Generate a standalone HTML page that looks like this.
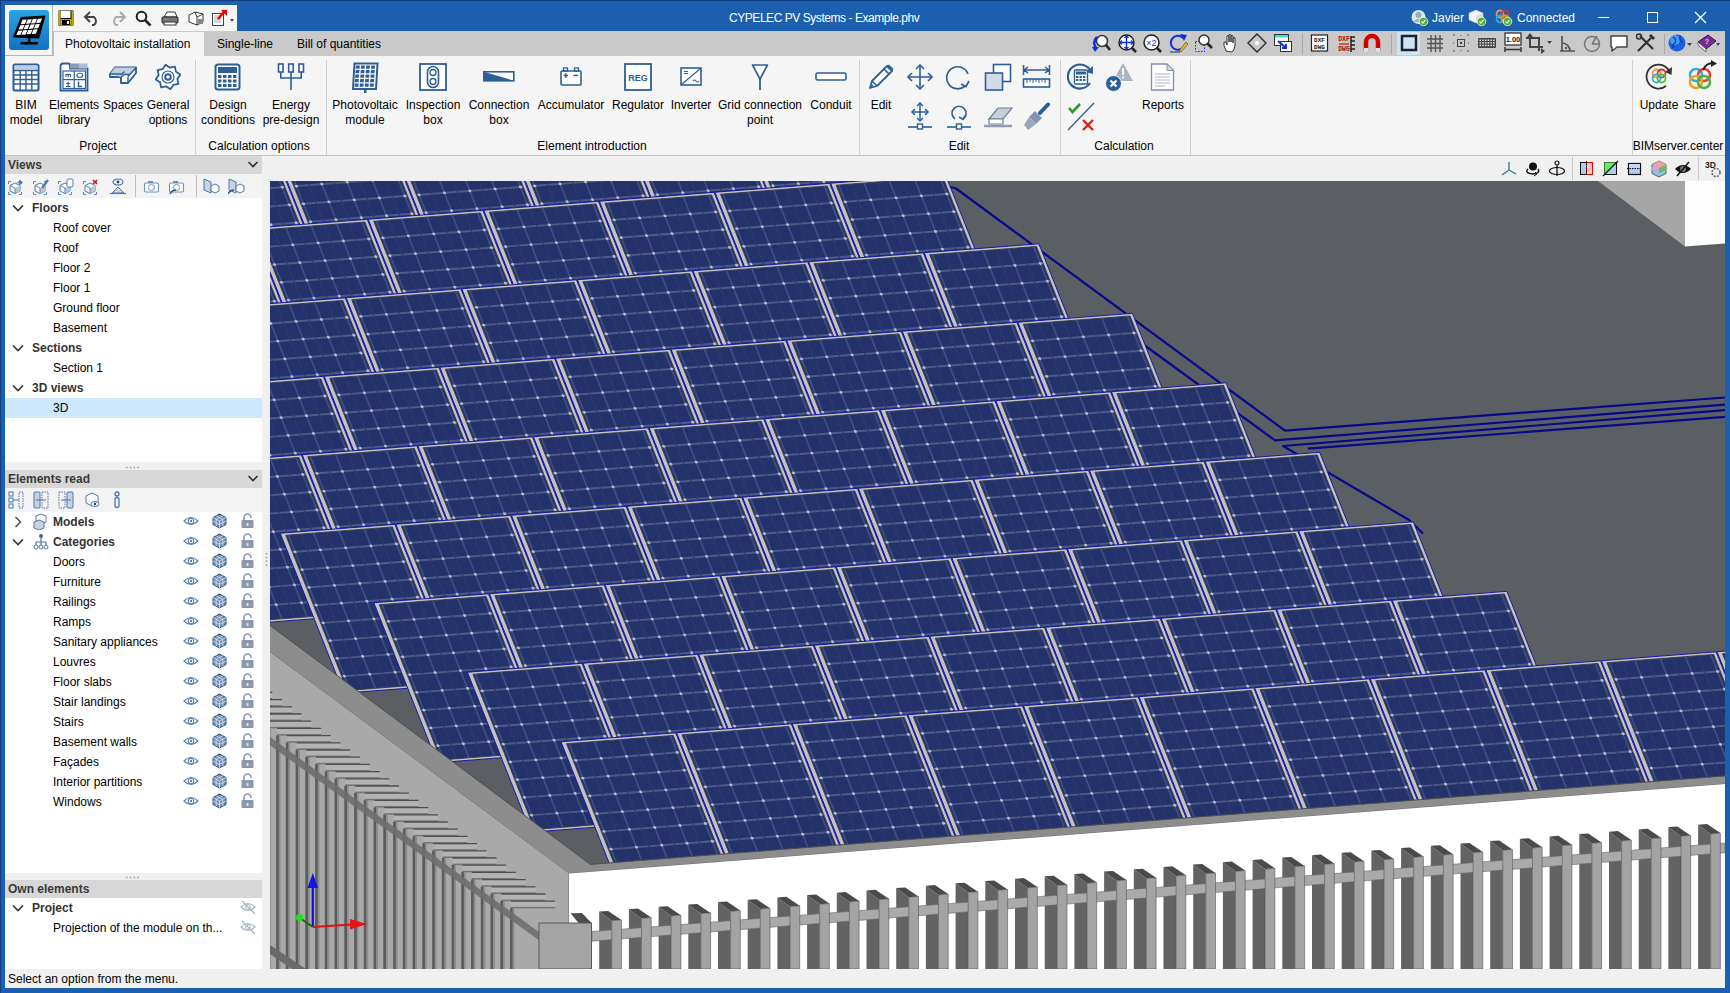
<!DOCTYPE html><html><head><meta charset="utf-8"><style>
*{box-sizing:border-box}
body{margin:0;width:1730px;height:993px;overflow:hidden;position:relative;background:#1b5fae;font-family:"Liberation Sans",sans-serif;font-size:12px;color:#000}
.a{position:absolute}
.t{position:absolute;white-space:nowrap;line-height:15px}
.hdr{position:absolute;left:5px;width:257px;height:18px;background:#d7d7d7;font-weight:bold;color:#3a3a3a;padding-left:3px;line-height:18px}
.tb{position:absolute;left:5px;width:257px;background:#f3f3f3}
.tree{position:absolute;left:5px;width:257px;background:#fff}
.it{position:absolute;white-space:nowrap;line-height:20px;height:20px}
.b{font-weight:bold;color:#333}
.rl{position:absolute;text-align:center;line-height:15px;white-space:nowrap}
.gl{position:absolute;top:139px;text-align:center;line-height:15px;white-space:nowrap}
.sep{position:absolute;top:60px;width:1px;height:95px;background:#cfcfcf}
</style></head><body><div class="a" style="left:0;top:0;width:1730px;height:1px;background:#0e3f85"></div><div class="a" style="left:0;top:0;width:1px;height:993px;background:#0e3f85"></div><div class="t" style="left:729px;top:10.5px;color:#fff;letter-spacing:-0.45px">CYPELEC PV Systems - Example.phv</div><div class="t" style="left:1432px;top:10.5px;color:#fff">Javier</div><div class="t" style="left:1517px;top:10.5px;color:#fff">Connected</div><div class="a" style="left:1598px;top:17px;width:11px;height:1px;background:#fff"></div><div class="a" style="left:1647px;top:12px;width:11px;height:11px;border:1px solid #fff"></div><svg class="a" style="left:1694px;top:11px" width="13" height="13"><path d="M1,1L12,12M12,1L1,12" stroke="#fff" stroke-width="1.3"/></svg><div class="a" style="left:53px;top:5px;width:184px;height:26px;background:#f5f5f5"></div><div class="a" style="left:5px;top:31px;width:1720px;height:25px;background:#c9c9c9"></div><div class="a" style="left:53px;top:32px;width:151px;height:24px;background:#f5f5f5;border-left:1px solid #bdbdbd"></div><div class="t" style="left:65px;top:37px">Photovoltaic installation</div><div class="t" style="left:217px;top:37px">Single-line</div><div class="t" style="left:297px;top:37px">Bill of quantities</div><div class="a" style="left:1397px;top:32px;width:23px;height:23px;background:#cce4f7"></div><div class="a" style="left:5px;top:5px;width:48px;height:51px;background:#f5f5f5;border-right:1px solid #b4b4b4;border-bottom:1px solid #b4b4b4"></div><div class="a" style="left:9px;top:10px;width:40px;height:40px;border-radius:3px;background:linear-gradient(#29a3e2,#1570c2)"></div><div class="a" style="left:5px;top:56px;width:1720px;height:99px;background:#f5f5f5"></div><div class="a" style="left:5px;top:155px;width:1720px;height:1px;background:#c3c3c3"></div><div class="sep" style="left:194.5px"></div><div class="sep" style="left:326px"></div><div class="sep" style="left:859px"></div><div class="sep" style="left:1059.5px"></div><div class="sep" style="left:1189.5px"></div><div class="sep" style="left:1631.5px"></div><div class="rl" style="left:-34px;width:120px;top:98px">BIM<br>model</div><div class="rl" style="left:14px;width:120px;top:98px">Elements<br>library</div><div class="rl" style="left:63px;width:120px;top:98px">Spaces</div><div class="rl" style="left:108px;width:120px;top:98px">General<br>options</div><div class="rl" style="left:168px;width:120px;top:98px">Design<br>conditions</div><div class="rl" style="left:231px;width:120px;top:98px">Energy<br>pre-design</div><div class="rl" style="left:305px;width:120px;top:98px">Photovoltaic<br>module</div><div class="rl" style="left:373px;width:120px;top:98px">Inspection<br>box</div><div class="rl" style="left:439px;width:120px;top:98px">Connection<br>box</div><div class="rl" style="left:511px;width:120px;top:98px">Accumulator</div><div class="rl" style="left:578px;width:120px;top:98px">Regulator</div><div class="rl" style="left:631px;width:120px;top:98px">Inverter</div><div class="rl" style="left:700px;width:120px;top:98px">Grid connection<br>point</div><div class="rl" style="left:771px;width:120px;top:98px">Conduit</div><div class="rl" style="left:821px;width:120px;top:98px">Edit</div><div class="rl" style="left:1103px;width:120px;top:98px">Reports</div><div class="rl" style="left:1599px;width:120px;top:98px">Update</div><div class="rl" style="left:1640px;width:120px;top:98px">Share</div><div class="gl" style="left:28px;width:140px">Project</div><div class="gl" style="left:189px;width:140px">Calculation options</div><div class="gl" style="left:522px;width:140px">Element introduction</div><div class="gl" style="left:889px;width:140px">Edit</div><div class="gl" style="left:1054px;width:140px">Calculation</div><div class="gl" style="left:1608px;width:140px">BIMserver.center</div><div class="a" style="left:5px;top:156px;width:1720px;height:813px;background:#f0f0f0"></div><div class="hdr" style="top:156px">Views</div><div class="tb" style="top:174px;height:24px"></div><div class="tree" style="top:198px;height:264px"></div><div class="a" style="left:5px;top:398px;width:257px;height:20px;background:#cce8ff"></div><div class="it b" style="left:32px;top:198px">Floors</div><svg class="a" style="left:12px;top:204px" width="12" height="8"><path d="M1,1.5L6,6.5L11,1.5" fill="none" stroke="#333" stroke-width="1.6"/></svg><div class="it" style="left:53px;top:218px">Roof cover</div><div class="it" style="left:53px;top:238px">Roof</div><div class="it" style="left:53px;top:258px">Floor 2</div><div class="it" style="left:53px;top:278px">Floor 1</div><div class="it" style="left:53px;top:298px">Ground floor</div><div class="it" style="left:53px;top:318px">Basement</div><div class="it b" style="left:32px;top:338px">Sections</div><svg class="a" style="left:12px;top:344px" width="12" height="8"><path d="M1,1.5L6,6.5L11,1.5" fill="none" stroke="#333" stroke-width="1.6"/></svg><div class="it" style="left:53px;top:358px">Section 1</div><div class="it b" style="left:32px;top:378px">3D views</div><svg class="a" style="left:12px;top:384px" width="12" height="8"><path d="M1,1.5L6,6.5L11,1.5" fill="none" stroke="#333" stroke-width="1.6"/></svg><div class="it" style="left:53px;top:398px">3D</div><div class="hdr" style="top:469.5px">Elements read</div><div class="tb" style="top:487.5px;height:24px"></div><div class="tree" style="top:511.5px;height:361px"></div><div class="it b" style="left:53px;top:512px">Models</div><svg class="a" style="left:14px;top:516px" width="8" height="12"><path d="M1.5,1L6.5,6L1.5,11" fill="none" stroke="#555" stroke-width="1.6"/></svg><div class="it b" style="left:53px;top:532px">Categories</div><svg class="a" style="left:12px;top:538px" width="12" height="8"><path d="M1,1.5L6,6.5L11,1.5" fill="none" stroke="#333" stroke-width="1.6"/></svg><div class="it" style="left:53px;top:552px">Doors</div><div class="it" style="left:53px;top:572px">Furniture</div><div class="it" style="left:53px;top:592px">Railings</div><div class="it" style="left:53px;top:612px">Ramps</div><div class="it" style="left:53px;top:632px">Sanitary appliances</div><div class="it" style="left:53px;top:652px">Louvres</div><div class="it" style="left:53px;top:672px">Floor slabs</div><div class="it" style="left:53px;top:692px">Stair landings</div><div class="it" style="left:53px;top:712px">Stairs</div><div class="it" style="left:53px;top:732px">Basement walls</div><div class="it" style="left:53px;top:752px">Fa&ccedil;ades</div><div class="it" style="left:53px;top:772px">Interior partitions</div><div class="it" style="left:53px;top:792px">Windows</div><div class="hdr" style="top:880px">Own elements</div><div class="tree" style="top:898px;height:71px"></div><div class="it b" style="left:32px;top:898px">Project</div><svg class="a" style="left:12px;top:904px" width="12" height="8"><path d="M1,1.5L6,6.5L11,1.5" fill="none" stroke="#333" stroke-width="1.6"/></svg><div class="it" style="left:53px;top:918px">Projection of the module on th...</div><div class="a" style="left:5px;top:969px;width:1720px;height:19px;background:#f0f0f0"></div><div class="t" style="left:8px;top:971.5px">Select an option from the menu.</div><svg class="a" style="left:9px;top:10px" width="40" height="40" viewBox="0 0 40 40"><polygon points="12.5,7.8 35.5,6.3 29.5,27.5 5,26.5" fill="#000" stroke="#000" stroke-width="1.8" stroke-linejoin="round"/><polygon points="13.5,9.8 17.7,9.5 16.0,13.9 11.8,14.2" fill="#fff"/><polygon points="11.3,15.2 15.5,15.0 13.7,19.3 9.5,19.6" fill="#fff"/><polygon points="9.1,20.7 13.3,20.4 11.5,24.7 7.3,25.0" fill="#fff"/><polygon points="18.7,9.5 22.9,9.2 21.1,13.5 16.9,13.8" fill="#fff"/><polygon points="16.4,14.9 20.6,14.6 18.8,19.0 14.6,19.2" fill="#fff"/><polygon points="14.2,20.3 18.4,20.0 16.6,24.4 12.4,24.7" fill="#fff"/><polygon points="23.8,9.1 28.0,8.8 26.2,13.2 22.0,13.5" fill="#fff"/><polygon points="21.6,14.5 25.8,14.3 24.0,18.6 19.8,18.9" fill="#fff"/><polygon points="19.3,20.0 23.5,19.7 21.7,24.0 17.5,24.3" fill="#fff"/><polygon points="28.9,8.8 33.1,8.5 31.3,12.8 27.1,13.1" fill="#fff"/><polygon points="26.7,14.2 30.9,13.9 29.1,18.3 24.9,18.5" fill="#fff"/><polygon points="24.4,19.6 28.6,19.3 26.9,23.7 22.7,24.0" fill="#fff"/><rect x="18.9" y="27" width="2.6" height="5.5" fill="#000"/><rect x="11.4" y="32" width="17.6" height="2.6" rx="1.3" fill="#000"/></svg><svg class="a" style="left:58px;top:10px" width="16" height="16" viewBox="0 0 16 16"><rect x="0.5" y="0.5" width="15" height="15" fill="#000"/><rect x="2.5" y="1" width="10" height="7" fill="#fff"/><rect x="2.5" y="9" width="11" height="6" fill="#bfb000"/><rect x="4" y="10" width="8" height="5" fill="#000"/><rect x="9" y="11" width="2" height="3" fill="#fff"/><rect x="0.5" y="1" width="2" height="14" fill="#bfb000"/><rect x="13.5" y="1" width="2" height="14" fill="#bfb000"/></svg><svg class="a" style="left:83px;top:10px" width="18" height="16" viewBox="0 0 18 16"><path d="M3,7 H11 A5,5 0 0 1 11,15 H9" fill="none" stroke="#444" stroke-width="2"/><path d="M7,2 L2,7 L7,12" fill="none" stroke="#444" stroke-width="2"/></svg><svg class="a" style="left:109px;top:10px" width="18" height="16" viewBox="0 0 18 16"><path d="M15,7 H7 A5,5 0 0 0 7,15 H9" fill="none" stroke="#aaa" stroke-width="2"/><path d="M11,2 L16,7 L11,12" fill="none" stroke="#aaa" stroke-width="2"/></svg><svg class="a" style="left:135px;top:10px" width="17" height="17" viewBox="0 0 17 17"><circle cx="6.5" cy="6.5" r="4.8" fill="none" stroke="#222" stroke-width="2"/><path d="M10,10 L15.5,15.5" stroke="#222" stroke-width="2.6"/></svg><svg class="a" style="left:161px;top:10px" width="18" height="16" viewBox="0 0 18 16"><path d="M3,7 L6,2 L14,2 L16,7 Z" fill="#fff" stroke="#333"/><rect x="1" y="7" width="16" height="6" rx="1" fill="#777" stroke="#222"/><rect x="3" y="12" width="12" height="3" fill="#fff" stroke="#333"/><circle cx="5" cy="9" r="1" fill="#3c3"/></svg><svg class="a" style="left:187px;top:10px" width="18" height="16" viewBox="0 0 18 16"><path d="M2,5 L8,2 L16,4 L16,12 L10,15 L2,12 Z" fill="#fff" stroke="#333"/><path d="M8,2 L10,7 L10,15 M10,7 L16,4" fill="none" stroke="#333"/><rect x="11" y="9" width="5" height="5" fill="#888"/></svg><svg class="a" style="left:211px;top:9px" width="24" height="18" viewBox="0 0 24 18"><rect x="1.5" y="4.5" width="11" height="12" fill="#fff" stroke="#444"/><path d="M3,7H10M3,9H10M3,11H10M3,13H10" stroke="#aaa"/><path d="M7,10 L13,3" stroke="#e00" stroke-width="2.5"/><polygon points="10,1 16,1 16,7" fill="#e00"/><polygon points="19,10 23,10 21,13" fill="#444"/></svg><svg class="a" style="left:1411px;top:9px" width="18" height="17" viewBox="0 0 18 17"><circle cx="7.5" cy="8" r="7" fill="#d8e8f0"/><circle cx="7.5" cy="6" r="3" fill="#9ab"/><path d="M2,13 Q7.5,7 13,13" fill="#9ab"/><circle cx="12.5" cy="12.5" r="4.3" fill="#4caf30" stroke="#fff" stroke-width="0.8"/><path d="M10.5,12.5 L12,14 L14.5,11" fill="none" stroke="#fff" stroke-width="1.2"/></svg><svg class="a" style="left:1468px;top:9px" width="19" height="17" viewBox="0 0 19 17"><polygon points="8,1 15,4 15,11 8,14 1,11 1,4" fill="#f4f4f4" stroke="#bbb" stroke-width="0.6"/><polygon points="8,7 15,4 15,11 8,14" fill="#ddd"/><circle cx="13.5" cy="12.5" r="4.3" fill="#4caf30" stroke="#fff" stroke-width="0.8"/><path d="M11.5,12.5 L13,14 L15.5,11" fill="none" stroke="#fff" stroke-width="1.2"/></svg><svg class="a" style="left:1495px;top:9px" width="18" height="17" viewBox="0 0 18 17"><circle cx="5" cy="5" r="3.5" fill="none" stroke="#e94" stroke-width="1.8"/><circle cx="10" cy="5" r="3.5" fill="none" stroke="#d33" stroke-width="1.8"/><circle cx="5" cy="10" r="3.5" fill="none" stroke="#3ad" stroke-width="1.8"/><circle cx="10" cy="10" r="3.5" fill="none" stroke="#e90" stroke-width="1.8"/><circle cx="12.5" cy="12.5" r="4.3" fill="#4caf30" stroke="#fff" stroke-width="0.8"/><path d="M10.5,12.5 L12,14 L14.5,11" fill="none" stroke="#fff" stroke-width="1.2"/></svg><svg class="a" style="left:12px;top:63px" width="28" height="29" viewBox="0 0 28 29"><rect x="1.5" y="1.5" width="25" height="26" rx="1.5" fill="#fff" stroke="#2e5e96" stroke-width="2"/><rect x="2.5" y="2.5" width="23" height="4" fill="#c3cde0"/><path d="M2,7.5H26M2,12H26M2,16.5H26M2,21H26M8.2,7V27M14,7V27M19.8,7V27" stroke="#2e5e96" stroke-width="1.4"/></svg><svg class="a" style="left:59px;top:62px" width="30" height="30" viewBox="0 0 30 30"><path d="M1.5,4 Q1.5,1.5 4,1.5 H9 Q11,1.5 11,4 V6.5 H28.5 V28.5 H1.5 Z" fill="#fff" stroke="#2e5e96" stroke-width="1.8"/><rect x="11" y="1.5" width="9" height="5" fill="#8c9dbc"/><rect x="20" y="1.5" width="8.5" height="5" fill="#b0bccf"/><rect x="4" y="9" width="22.5" height="17.5" fill="none" stroke="#2e5e96" stroke-width="1.2"/><path d="M15.2,9V26.5M4,17.7H26.5" stroke="#2e5e96" stroke-width="1.2"/><path d="M7,15V12.5H11.5V15M9.2,11.5V15" fill="none" stroke="#2e5e96" stroke-width="1.1"/><ellipse cx="20.8" cy="13.3" rx="3" ry="2" fill="none" stroke="#2e5e96" stroke-width="1.1"/><path d="M19.5,19.5V24.5H23" fill="none" stroke="#2e5e96" stroke-width="1.5"/><path d="M7,24.5H11.5M9.2,19.5V24.5M7.2,21.5L11.2,21.5" stroke="#2e5e96" stroke-width="1.1"/></svg><svg class="a" style="left:108px;top:66px" width="30" height="22" viewBox="0 0 30 22"><polygon points="2,8 7,1.5 28,1.5 28,7 20,17 13,17 13,11 2,11" fill="#fff" stroke="#2e5e96" stroke-width="1.8" stroke-linejoin="round"/><polygon points="7,1.5 28,1.5 22,8 16,8 13,11 2,8" fill="#c3cde0"/><path d="M2,8H14L16.5,5.5M13,11V17M20,10.5V17M20,10.5L28,1.8M13,11L16.5,8.5H21.5" fill="none" stroke="#2e5e96" stroke-width="1.4"/></svg><svg class="a" style="left:155px;top:64px" width="26" height="26" viewBox="0 0 26 26"><polygon points="25.3,10.6 22.3,14.9 23.4,19.9 18.3,20.9 15.4,25.3 11.1,22.3 6.1,23.4 5.1,18.3 0.7,15.4 3.7,11.1 2.6,6.1 7.7,5.1 10.6,0.7 14.9,3.7 19.9,2.6 20.9,7.7" fill="#fff" stroke="#2e5e96" stroke-width="1.8" stroke-linejoin="round"/><circle cx="13" cy="13" r="6" fill="none" stroke="#2e5e96" stroke-width="1.2"/><circle cx="13" cy="13" r="2.8" fill="none" stroke="#2e5e96" stroke-width="2"/></svg><svg class="a" style="left:214px;top:63px" width="27" height="28" viewBox="0 0 27 28"><rect x="1.5" y="1.5" width="24" height="25" rx="2.5" fill="#fff" stroke="#2e5e96" stroke-width="2"/><rect x="4" y="4" width="19" height="6" fill="#2e5e96"/><rect x="4" y="12.0" width="3.5" height="3" fill="#2e5e96"/><rect x="4" y="16.5" width="3.5" height="3" fill="#2e5e96"/><rect x="4" y="21.0" width="3.5" height="3" fill="#2e5e96"/><rect x="9" y="12.0" width="3.5" height="3" fill="#2e5e96"/><rect x="9" y="16.5" width="3.5" height="3" fill="#2e5e96"/><rect x="9" y="21.0" width="3.5" height="3" fill="#2e5e96"/><rect x="14" y="12.0" width="3.5" height="3" fill="#2e5e96"/><rect x="14" y="16.5" width="3.5" height="3" fill="#2e5e96"/><rect x="14" y="21.0" width="3.5" height="3" fill="#2e5e96"/><rect x="19" y="12.0" width="3.5" height="3" fill="#2e5e96"/><rect x="19" y="16.5" width="3.5" height="3" fill="#2e5e96"/><rect x="19" y="21.0" width="3.5" height="3" fill="#2e5e96"/></svg><svg class="a" style="left:277px;top:63px" width="28" height="28" viewBox="0 0 28 28"><rect x="1.5" y="1" width="4.5" height="8" fill="#fff" stroke="#2e5e96" stroke-width="1.6"/><rect x="11.7" y="1" width="4.5" height="8" fill="#fff" stroke="#2e5e96" stroke-width="1.6"/><rect x="22" y="1" width="4.5" height="8" fill="#fff" stroke="#2e5e96" stroke-width="1.6"/><path d="M3.8,9V15H24.2V9M14,9V27" fill="none" stroke="#2e5e96" stroke-width="1.6"/></svg><svg class="a" style="left:352px;top:62px" width="27" height="32" viewBox="0 0 27 32"><polygon points="2.5,1.5 25.5,1.5 24,27 1,27" fill="#fff" stroke="#2e5e96" stroke-width="2"/><polygon points="4.0,3.5 7.8,3.5 7.5,6.8 3.7,6.8" fill="#2e5e96"/><polygon points="3.7,8.0 7.5,8.0 7.2,11.3 3.4000000000000004,11.3" fill="#2e5e96"/><polygon points="3.4,12.5 7.2,12.5 6.9,15.8 3.1,15.8" fill="#2e5e96"/><polygon points="3.1,17.0 6.9,17.0 6.6,20.3 2.8000000000000003,20.3" fill="#2e5e96"/><polygon points="2.8,21.5 6.6,21.5 6.3,24.8 2.5,24.8" fill="#2e5e96"/><polygon points="9.1,3.5 12.899999999999999,3.5 12.6,6.8 8.8,6.8" fill="#2e5e96"/><polygon points="8.799999999999999,8.0 12.599999999999998,8.0 12.299999999999999,11.3 8.5,11.3" fill="#2e5e96"/><polygon points="8.5,12.5 12.299999999999999,12.5 12.0,15.8 8.200000000000001,15.8" fill="#2e5e96"/><polygon points="8.2,17.0 11.999999999999998,17.0 11.7,20.3 7.9,20.3" fill="#2e5e96"/><polygon points="7.8999999999999995,21.5 11.7,21.5 11.4,24.8 7.6000000000000005,24.8" fill="#2e5e96"/><polygon points="14.2,3.5 18.0,3.5 17.7,6.8 13.899999999999999,6.8" fill="#2e5e96"/><polygon points="13.899999999999999,8.0 17.7,8.0 17.4,11.3 13.599999999999998,11.3" fill="#2e5e96"/><polygon points="13.6,12.5 17.4,12.5 17.099999999999998,15.8 13.299999999999999,15.8" fill="#2e5e96"/><polygon points="13.299999999999999,17.0 17.1,17.0 16.8,20.3 12.999999999999998,20.3" fill="#2e5e96"/><polygon points="13.0,21.5 16.8,21.5 16.5,24.8 12.7,24.8" fill="#2e5e96"/><polygon points="19.299999999999997,3.5 23.099999999999998,3.5 22.799999999999997,6.8 19.0,6.8" fill="#2e5e96"/><polygon points="18.999999999999996,8.0 22.799999999999997,8.0 22.499999999999996,11.3 18.7,11.3" fill="#2e5e96"/><polygon points="18.699999999999996,12.5 22.499999999999996,12.5 22.199999999999996,15.8 18.4,15.8" fill="#2e5e96"/><polygon points="18.4,17.0 22.2,17.0 21.9,20.3 18.1,20.3" fill="#2e5e96"/><polygon points="18.099999999999998,21.5 21.9,21.5 21.599999999999998,24.8 17.8,24.8" fill="#2e5e96"/><rect x="12" y="27" width="2.5" height="4" fill="#2e5e96"/></svg><svg class="a" style="left:419px;top:63px" width="28" height="28" viewBox="0 0 28 28"><rect x="1" y="1" width="26" height="26" fill="#fff" stroke="#2e5e96" stroke-width="1.8"/><rect x="8.5" y="3.5" width="11" height="21" rx="5.5" fill="#fff" stroke="#2e5e96" stroke-width="1.6"/><circle cx="14" cy="9.5" r="3" fill="none" stroke="#2e5e96" stroke-width="1.3"/><circle cx="14" cy="18.5" r="3" fill="none" stroke="#2e5e96" stroke-width="1.3"/></svg><svg class="a" style="left:483px;top:71px" width="32" height="11" viewBox="0 0 32 11"><rect x="0.8" y="0.8" width="30" height="9" fill="#fff" stroke="#2e5e96" stroke-width="1.6"/><polygon points="0.8,0.8 31,9.8 0.8,9.8" fill="#2e5e96"/></svg><svg class="a" style="left:560px;top:67px" width="22" height="19" viewBox="0 0 22 19"><rect x="1" y="4" width="20" height="14" rx="1" fill="#fff" stroke="#2e5e96" stroke-width="1.6"/><rect x="3.5" y="1" width="4" height="3" fill="none" stroke="#2e5e96" stroke-width="1.3"/><rect x="14.5" y="1" width="4" height="3" fill="none" stroke="#2e5e96" stroke-width="1.3"/><path d="M3.5,8.5H8M5.75,6.3V10.7M13.5,8.5H18" stroke="#2e5e96" stroke-width="1.5"/></svg><svg class="a" style="left:624px;top:63px" width="28" height="28" viewBox="0 0 28 28"><rect x="1" y="1" width="26" height="26" fill="#fff" stroke="#2e5e96" stroke-width="1.8"/><text x="14" y="18" text-anchor="middle" font-family="Liberation Sans" font-weight="bold" font-size="9" fill="#2e5e96">REG</text></svg><svg class="a" style="left:680px;top:67px" width="22" height="19" viewBox="0 0 22 19"><rect x="1" y="1" width="20" height="17" fill="#fff" stroke="#2e5e96" stroke-width="1.6"/><path d="M1.5,17.5L20.5,1.5M4,4.5H8M4,6.5H8M13,14 q1.5,-2 3,0 t3,0" fill="none" stroke="#2e5e96" stroke-width="1.1"/></svg><svg class="a" style="left:751px;top:63px" width="18" height="28" viewBox="0 0 18 28"><path d="M1.5,2H16.5L9,16Z" fill="#fff" stroke="#2e5e96" stroke-width="1.6" stroke-linejoin="round"/><path d="M9,15V27" stroke="#2e5e96" stroke-width="1.8"/></svg><svg class="a" style="left:815px;top:72px" width="32" height="10" viewBox="0 0 32 10"><rect x="1" y="1" width="30" height="7" rx="1.5" fill="#fff" stroke="#2e5e96" stroke-width="1.6"/></svg><svg class="a" style="left:868px;top:63px" width="26" height="27" viewBox="0 0 26 27"><polygon points="2,25 4,18 19,3 24,8 9,23" fill="#fff" stroke="#2e5e96" stroke-width="1.8" stroke-linejoin="round"/><path d="M4,18L9,23M16,6L21,11M2,25L5,22" stroke="#2e5e96" stroke-width="1.6"/><polygon points="19,3 24,8 25.5,6 21,1.5" fill="#2e5e96"/></svg><svg class="a" style="left:907px;top:64px" width="26" height="26" viewBox="0 0 26 26"><path d="M13,1V25M1,13H25" stroke="#2e5e96" stroke-width="1.6"/><path d="M9,5L13,1L17,5M9,21L13,25L17,21M5,9L1,13L5,17M21,9L25,13L21,17" fill="none" stroke="#2e5e96" stroke-width="1.6"/></svg><svg class="a" style="left:945px;top:64px" width="27" height="27" viewBox="0 0 27 27"><path d="M20,22 A11,11 0 1 1 23,10" fill="none" stroke="#2e5e96" stroke-width="1.7"/><path d="M24,17 L21,22.5 L16,20" fill="none" stroke="#2e5e96" stroke-width="1.7"/></svg><svg class="a" style="left:984px;top:63px" width="29" height="29" viewBox="0 0 29 29"><rect x="9.5" y="1.5" width="17" height="17" fill="#fff" stroke="#2e5e96" stroke-width="1.6"/><rect x="1.5" y="10" width="17" height="17" fill="#d5dbe6" stroke="#2e5e96" stroke-width="1.6"/></svg><svg class="a" style="left:1022px;top:64px" width="29" height="25" viewBox="0 0 29 25"><path d="M1.5,1V11M27.5,1V11M2,6H27M6,3L2,6L6,9M23,3L27,6L23,9" fill="none" stroke="#2e5e96" stroke-width="1.5"/><rect x="1.5" y="15" width="26" height="8" fill="#fff" stroke="#2e5e96" stroke-width="1.6"/><path d="M5,15V19M8,15V18M11,15V19M14,15V18M17,15V19M20,15V18M23,15V19" stroke="#2e5e96" stroke-width="1"/></svg><svg class="a" style="left:907px;top:102px" width="26" height="28" viewBox="0 0 26 28"><path d="M13,1V19M5,10H21" stroke="#2e5e96" stroke-width="1.5"/><path d="M10,4L13,1L16,4M10,16L13,19L16,16M8,7L5,10L8,13M18,7L21,10L18,13" fill="none" stroke="#2e5e96" stroke-width="1.5"/><path d="M1,25H25" stroke="#2e5e96" stroke-width="1.6"/><rect x="10.5" y="22" width="5" height="5" fill="#fff" stroke="#2e5e96" stroke-width="1.4"/></svg><svg class="a" style="left:946px;top:102px" width="26" height="28" viewBox="0 0 26 28"><path d="M9,17 A7,7 0 1 1 17,17" fill="none" stroke="#2e5e96" stroke-width="1.6"/><path d="M20,13L17,17.5L13,15" fill="none" stroke="#2e5e96" stroke-width="1.5"/><path d="M1,25H25" stroke="#2e5e96" stroke-width="1.6"/><rect x="10.5" y="22" width="5" height="5" fill="#fff" stroke="#2e5e96" stroke-width="1.4"/></svg><svg class="a" style="left:983px;top:106px" width="31" height="22" viewBox="0 0 31 22"><polygon points="6,13 15,2 29,2 20,13" fill="#c9cfda" stroke="#6f7f99" stroke-width="1.2"/><polygon points="6,13 20,13 20,18 6,18" fill="#fff" stroke="#6f7f99" stroke-width="1.2"/><path d="M1,20H29" stroke="#8e9bb0" stroke-width="2.5"/></svg><svg class="a" style="left:1023px;top:102px" width="28" height="29" viewBox="0 0 28 29"><path d="M17,11 L25,2.5" stroke="#2e5e96" stroke-width="4" stroke-linecap="round"/><polygon points="12,9 19,16 13,22 6,15" fill="#8594b0"/><polygon points="6,15 13,22 5,28 1,23" fill="#9aa6bd"/></svg><svg class="a" style="left:1067px;top:63px" width="28" height="29" viewBox="0 0 28 29"><path d="M23,20 A12,12 0 1 1 24,9" fill="none" stroke="#2e5e96" stroke-width="2.2"/><polygon points="26,3 26,11 19,9" fill="#2e5e96"/><rect x="7.5" y="7" width="13" height="14" rx="1" fill="#fff" stroke="#2e5e96" stroke-width="1.4"/><rect x="9" y="8.5" width="10" height="3" fill="#2e5e96"/><rect x="9.0" y="13" width="2.4" height="2" fill="#2e5e96"/><rect x="9.0" y="16" width="2.4" height="2" fill="#2e5e96"/><rect x="12.5" y="13" width="2.4" height="2" fill="#2e5e96"/><rect x="12.5" y="16" width="2.4" height="2" fill="#2e5e96"/><rect x="16.0" y="13" width="2.4" height="2" fill="#2e5e96"/><rect x="16.0" y="16" width="2.4" height="2" fill="#2e5e96"/></svg><svg class="a" style="left:1104px;top:62px" width="31" height="31" viewBox="0 0 31 31"><polygon points="19,1 29,19 9,19" fill="#aab4c4"/><rect x="18.2" y="6" width="1.8" height="7" fill="#fff"/><rect x="18.2" y="14.5" width="1.8" height="2" fill="#fff"/><circle cx="9.5" cy="21.5" r="8" fill="#2e5e96" stroke="#fff" stroke-width="1"/><path d="M6.5,18.5L12.5,24.5M12.5,18.5L6.5,24.5" stroke="#fff" stroke-width="2.2"/></svg><svg class="a" style="left:1067px;top:102px" width="28" height="29" viewBox="0 0 28 29"><path d="M2,6 L5.5,10 L13,2" fill="none" stroke="#2a9a2a" stroke-width="2.6"/><path d="M1,28 L27,1" stroke="#2e5e96" stroke-width="1.3"/><path d="M16,18L26,28M26,18L16,28" stroke="#e21b1b" stroke-width="2.4"/></svg><svg class="a" style="left:1150px;top:63px" width="25" height="28" viewBox="0 0 25 28"><polygon points="1.5,1 17,1 23.5,7.5 23.5,27 1.5,27" fill="#fff" stroke="#7d8ead" stroke-width="1.3"/><polygon points="17,1 17,7.5 23.5,7.5" fill="#d8dde8" stroke="#7d8ead" stroke-width="1"/><path d="M5,11H20M5,14H20M5,17H20M5,20H20M5,23H15" stroke="#aab5cc" stroke-width="1"/></svg><svg class="a" style="left:1645px;top:62px" width="28" height="29" viewBox="0 0 28 29"><path d="M21,24 A12,12 0 1 1 25,11" fill="none" stroke="#333" stroke-width="1.8"/><polygon points="27,5 26.5,13 20,10" fill="#333"/><circle cx="11.5" cy="11.5" r="4" fill="none" stroke="#e94" stroke-width="1.8"/><circle cx="16.5" cy="11.5" r="4" fill="none" stroke="#d33" stroke-width="1.8"/><circle cx="11.5" cy="16.5" r="4" fill="none" stroke="#3ad" stroke-width="1.8"/><circle cx="16.5" cy="16.5" r="4" fill="none" stroke="#5b3" stroke-width="1.8"/></svg><svg class="a" style="left:1686px;top:60px" width="32" height="31" viewBox="0 0 32 31"><circle cx="10" cy="15" r="6" fill="none" stroke="#2ab0e0" stroke-width="2.6"/><circle cx="18" cy="15" r="6" fill="none" stroke="#e04040" stroke-width="2.6"/><circle cx="10" cy="22" r="6" fill="none" stroke="#f0a020" stroke-width="2.6"/><circle cx="18" cy="22" r="6" fill="none" stroke="#50b040" stroke-width="2.6"/><path d="M17,10 Q20,3 27,3" fill="none" stroke="#222" stroke-width="2.2"/><polygon points="25,0 31,3.5 25,7" fill="#222"/></svg><svg class="a" style="left:1091px;top:33px" width="20" height="20" viewBox="0 0 20 20"><circle cx="11" cy="8" r="5.5" fill="#fff" stroke="#333" stroke-width="1.5"/><path d="M15,12L19,17" stroke="#222" stroke-width="2.5"/><path d="M6,4 Q1,9 5,15" fill="none" stroke="#1030e0" stroke-width="2.5"/><polygon points="1,14 8,14 4,19" fill="#1030e0"/></svg><svg class="a" style="left:1117px;top:33px" width="20" height="20" viewBox="0 0 20 20"><circle cx="9.5" cy="9.5" r="7.5" fill="#fff" stroke="#222" stroke-width="1.5"/><path d="M15,15L19,19" stroke="#222" stroke-width="2.5"/><path d="M9.5,3V16M3,9.5H16" stroke="#1030e0" stroke-width="1.4"/><path d="M7.5,5L9.5,3L11.5,5M7.5,14L9.5,16L11.5,14M5,7.5L3,9.5L5,11.5M14,7.5L16,9.5L14,11.5" fill="none" stroke="#1030e0" stroke-width="1.4"/></svg><svg class="a" style="left:1142px;top:33px" width="20" height="20" viewBox="0 0 20 20"><circle cx="9.5" cy="9.5" r="7.5" fill="#fff" stroke="#222" stroke-width="1.5"/><path d="M15,15L19,19" stroke="#222" stroke-width="2.5"/><text x="9.5" y="13" text-anchor="middle" font-family="Liberation Sans" font-size="9" fill="#1030e0">&#215;2</text></svg><svg class="a" style="left:1168px;top:33px" width="20" height="20" viewBox="0 0 20 20"><path d="M15,5 A7,7 0 1 0 13,16" fill="none" stroke="#1030e0" stroke-width="2"/><polygon points="12,1 19,2 16,8" fill="#1030e0"/><polygon points="11,18 18,9 20,11 13,19" fill="#e8c020" stroke="#333" stroke-width="0.6"/><path d="M2,19H12" stroke="#333" stroke-width="1"/></svg><svg class="a" style="left:1194px;top:33px" width="20" height="20" viewBox="0 0 20 20"><rect x="1.5" y="8.5" width="9" height="10" fill="none" stroke="#1030e0" stroke-dasharray="1.5,1.5"/><circle cx="10" cy="7" r="5" fill="#fff" stroke="#333" stroke-width="1.5"/><path d="M13.5,10.5L18,15" stroke="#222" stroke-width="2.5"/></svg><svg class="a" style="left:1221px;top:33px" width="20" height="20" viewBox="0 0 20 20"><path d="M5,18 Q2,12 3,9 L5,9 L6,12 L6,3 Q7,1.5 8,3 L8,9 L8,2 Q9,0.5 10,2 L10,9 L10,3 Q11,1.5 12,3 L12,10 L12,5 Q13,3.5 14,5 L14,13 Q13,18 11,19 Z" fill="#fff" stroke="#333" stroke-width="1"/></svg><svg class="a" style="left:1247px;top:33px" width="20" height="20" viewBox="0 0 20 20"><path d="M10,1 L14,5 L19,10 L14,15 L10,19 L6,15 L1,10 L6,5 Z" fill="none" stroke="#333" stroke-width="1.5"/><circle cx="10" cy="10" r="2" fill="#fff"/></svg><svg class="a" style="left:1273px;top:33px" width="20" height="20" viewBox="0 0 20 20"><rect x="1.5" y="1.5" width="14" height="11" fill="#fff" stroke="#333"/><rect x="2" y="2" width="13" height="2.5" fill="#3cd8f0"/><rect x="7.5" y="8.5" width="11" height="10" fill="#fff" stroke="#333"/><path d="M5,8 L13,15 M9,15H13V11" fill="none" stroke="#1030e0" stroke-width="2"/></svg><svg class="a" style="left:1310px;top:33px" width="20" height="20" viewBox="0 0 20 20"><rect x="1.5" y="2" width="16" height="16" fill="#fff" stroke="#222" stroke-width="1.2"/><text x="9.5" y="9" text-anchor="middle" font-family="Liberation Mono" font-weight="bold" font-size="6" fill="#111">DXF</text><text x="9.5" y="16" text-anchor="middle" font-family="Liberation Mono" font-weight="bold" font-size="6" fill="#111">DWG</text></svg><svg class="a" style="left:1336px;top:33px" width="20" height="20" viewBox="0 0 20 20"><text x="8" y="8" text-anchor="middle" font-family="Liberation Mono" font-weight="bold" font-size="6.5" fill="#b01010">DXF</text><text x="8" y="18" text-anchor="middle" font-family="Liberation Mono" font-weight="bold" font-size="6.5" fill="#b01010">DWG</text><path d="M3,11H13" stroke="#e00" stroke-width="1.2"/><path d="M15,3V19M15,4H19M15,8H19M15,12H19M15,16H19" stroke="#222" stroke-width="1.5"/></svg><svg class="a" style="left:1362px;top:33px" width="20" height="20" viewBox="0 0 20 20"><path d="M4,18 V9 A6,6 0 0 1 16,9 V18" fill="none" stroke="#d00000" stroke-width="4.5"/><rect x="2" y="15" width="4.5" height="3.5" fill="#ddd"/><rect x="13.5" y="15" width="4.5" height="3.5" fill="#ddd"/></svg><svg class="a" style="left:1399px;top:33px" width="20" height="20" viewBox="0 0 20 20"><rect x="3" y="3" width="14" height="14" fill="none" stroke="#222" stroke-width="2.5"/></svg><svg class="a" style="left:1425px;top:33px" width="20" height="20" viewBox="0 0 20 20"><path d="M2,6H18M2,10.5H18M2,15H18M6,2V19M10.5,2V19M15,2V19" stroke="#555" stroke-width="1.4"/></svg><svg class="a" style="left:1451px;top:33px" width="20" height="20" viewBox="0 0 20 20"><path d="M2,2H4M16,2H18M2,18H4M16,18H18M2,10H3M17,10H18M10,2V3M10,17V18" stroke="#555"/><rect x="6.5" y="6.5" width="7" height="7" fill="none" stroke="#444"/><rect x="9" y="9" width="2" height="2" fill="#444"/></svg><svg class="a" style="left:1477px;top:33px" width="20" height="20" viewBox="0 0 20 20"><rect x="1" y="5" width="18" height="10" rx="1" fill="#444"/><rect x="2.5" y="6.5" width="1.6" height="1.5" fill="#ddd"/><rect x="2.5" y="9.1" width="1.6" height="1.5" fill="#ddd"/><rect x="2.5" y="11.7" width="1.6" height="1.5" fill="#ddd"/><rect x="5.2" y="6.5" width="1.6" height="1.5" fill="#ddd"/><rect x="5.2" y="9.1" width="1.6" height="1.5" fill="#ddd"/><rect x="5.2" y="11.7" width="1.6" height="1.5" fill="#ddd"/><rect x="7.9" y="6.5" width="1.6" height="1.5" fill="#ddd"/><rect x="7.9" y="9.1" width="1.6" height="1.5" fill="#ddd"/><rect x="7.9" y="11.7" width="1.6" height="1.5" fill="#ddd"/><rect x="10.600000000000001" y="6.5" width="1.6" height="1.5" fill="#ddd"/><rect x="10.600000000000001" y="9.1" width="1.6" height="1.5" fill="#ddd"/><rect x="10.600000000000001" y="11.7" width="1.6" height="1.5" fill="#ddd"/><rect x="13.3" y="6.5" width="1.6" height="1.5" fill="#ddd"/><rect x="13.3" y="9.1" width="1.6" height="1.5" fill="#ddd"/><rect x="13.3" y="11.7" width="1.6" height="1.5" fill="#ddd"/><rect x="16.0" y="6.5" width="1.6" height="1.5" fill="#ddd"/><rect x="16.0" y="9.1" width="1.6" height="1.5" fill="#ddd"/><rect x="16.0" y="11.7" width="1.6" height="1.5" fill="#ddd"/></svg><svg class="a" style="left:1503px;top:32px" width="20" height="21" viewBox="0 0 20 21"><rect x="2" y="1" width="16" height="12" fill="#fff" stroke="#333" stroke-width="1.3"/><text x="10" y="10" text-anchor="middle" font-family="Liberation Sans" font-weight="bold" font-size="7.5" fill="#222">1.00</text><path d="M2,17.5H18M2,15V20M18,15V20" stroke="#333" stroke-width="1.4"/></svg><svg class="a" style="left:1524px;top:32px" width="29" height="23" viewBox="0 0 29 23"><path d="M6,2V15H19M2,6H15V19" fill="none" stroke="#444" stroke-width="2"/><polygon points="3,5 6,1 9,5" fill="#444"/><polygon points="17,16 21,19 17,22" fill="#444"/><polygon points="23,9 28,9 25.5,12" fill="#444"/></svg><svg class="a" style="left:1557px;top:33px" width="20" height="20" viewBox="0 0 20 20"><path d="M3,18H18M5,18V3M5,10 A8,8 0 0 1 13,18" fill="none" stroke="#555" stroke-width="1.7"/><circle cx="9" cy="15" r="1.2" fill="#555"/></svg><svg class="a" style="left:1582px;top:33px" width="20" height="20" viewBox="0 0 20 20"><circle cx="10" cy="11" r="7.5" fill="none" stroke="#777" stroke-width="1.5"/><path d="M10,11H17.5M10,11L15,3" stroke="#777" stroke-width="1.5"/></svg><svg class="a" style="left:1609px;top:33px" width="20" height="20" viewBox="0 0 20 20"><path d="M2,3H18V14H8L3,18V14H2Z" fill="#fff" stroke="#444" stroke-width="1.5" stroke-linejoin="round"/></svg><svg class="a" style="left:1635px;top:33px" width="20" height="20" viewBox="0 0 20 20"><path d="M3,18L16,5M5,3L18,16" stroke="#333" stroke-width="2.2"/><circle cx="4" cy="3.5" r="2.5" fill="none" stroke="#333" stroke-width="1.5"/><path d="M15,2L19,6" stroke="#333" stroke-width="3"/></svg><svg class="a" style="left:1668px;top:33px" width="25" height="20" viewBox="0 0 25 20"><circle cx="9" cy="10" r="8.5" fill="#1a60e0"/><circle cx="7" cy="7" r="5" fill="#58b0ff" opacity="0.7"/><path d="M5,4 Q9,6 7,10 Q4,12 5,15 M12,3 Q11,8 15,9" fill="none" stroke="#0a3a90" stroke-width="1.2"/><polygon points="19,10 24,10 21.5,13" fill="#444"/></svg><svg class="a" style="left:1696px;top:33px" width="25" height="20" viewBox="0 0 25 20"><polygon points="2,9 12,2 20,8 10,16" fill="#7a2a9a" stroke="#3a1050" stroke-width="1"/><polygon points="2,9 10,16 10,19 2,12" fill="#eee" stroke="#555" stroke-width="0.8"/><text x="11" y="11" text-anchor="middle" font-family="Liberation Sans" font-weight="bold" font-size="7" fill="#f0e020">?</text><polygon points="20,10 24,10 22,13" fill="#444"/></svg><div class="a" style="left:1302.3px;top:34px;width:1px;height:20px;background:#a8a8a8"></div><div class="a" style="left:1391px;top:34px;width:1px;height:20px;background:#a8a8a8"></div><div class="a" style="left:1664.2px;top:34px;width:1px;height:20px;background:#a8a8a8"></div><svg class="a" style="left:8px;top:178px" width="17" height="17" viewBox="0 0 17 17"><path d="M0.5,6V3.5H3M11,3.5H13.5V6M0.5,14V16.5H3M11,16.5H13.5V14" fill="none" stroke="#4f78a8" stroke-width="0.9"/><polygon points="7,5 12,7.5 12,13 7,15.5 2,13 2,7.5" fill="#fff" stroke="#4f78a8" stroke-width="1"/><polygon points="7,10 12,7.5 12,13 7,15.5" fill="#b9c6d8"/><path d="M2,7.5L7,10L7,15.5" fill="none" stroke="#4f78a8" stroke-width="0.9"/><path d="M12,2V7M9.5,4.5H14.5" stroke="#4f78a8" stroke-width="1.5"/></svg><svg class="a" style="left:33px;top:178px" width="17" height="17" viewBox="0 0 17 17"><path d="M0.5,6V3.5H3M11,3.5H13.5V6M0.5,14V16.5H3M11,16.5H13.5V14" fill="none" stroke="#4f78a8" stroke-width="0.9"/><polygon points="7,5 12,7.5 12,13 7,15.5 2,13 2,7.5" fill="#fff" stroke="#4f78a8" stroke-width="1"/><polygon points="7,10 12,7.5 12,13 7,15.5" fill="#b9c6d8"/><path d="M2,7.5L7,10L7,15.5" fill="none" stroke="#4f78a8" stroke-width="0.9"/><path d="M9,10L15,2" stroke="#4f78a8" stroke-width="2.2"/></svg><svg class="a" style="left:58px;top:178px" width="17" height="17" viewBox="0 0 17 17"><path d="M0.5,6V3.5H3M11,3.5H13.5V6M0.5,14V16.5H3M11,16.5H13.5V14" fill="none" stroke="#4f78a8" stroke-width="0.9"/><polygon points="7,5 12,7.5 12,13 7,15.5 2,13 2,7.5" fill="#fff" stroke="#4f78a8" stroke-width="1"/><polygon points="7,10 12,7.5 12,13 7,15.5" fill="#b9c6d8"/><path d="M2,7.5L7,10L7,15.5" fill="none" stroke="#4f78a8" stroke-width="0.9"/><rect x="9" y="1" width="6" height="8" rx="1.5" fill="#fff" stroke="#4f78a8"/></svg><svg class="a" style="left:83px;top:178px" width="17" height="17" viewBox="0 0 17 17"><path d="M0.5,6V3.5H3M11,3.5H13.5V6M0.5,14V16.5H3M11,16.5H13.5V14" fill="none" stroke="#4f78a8" stroke-width="0.9"/><polygon points="7,5 12,7.5 12,13 7,15.5 2,13 2,7.5" fill="#fff" stroke="#4f78a8" stroke-width="1"/><polygon points="7,10 12,7.5 12,13 7,15.5" fill="#b9c6d8"/><path d="M2,7.5L7,10L7,15.5" fill="none" stroke="#4f78a8" stroke-width="0.9"/><path d="M10,2L14,6M14,2L10,6" stroke="#e01010" stroke-width="1.5"/></svg><svg class="a" style="left:109px;top:178px" width="17" height="17" viewBox="0 0 17 17"><ellipse cx="9" cy="4" rx="5" ry="3" fill="none" stroke="#4f78a8" stroke-width="1.2"/><circle cx="9" cy="4" r="1.4" fill="#245"/><path d="M3,15L9,9L15,15Z" fill="#c9d2e0" stroke="#4f78a8"/><path d="M1,15.5H17" stroke="#4f78a8" stroke-width="1.2"/></svg><div class="a" style="left:134.5px;top:175px;width:1px;height:22px;background:#bdbdbd"></div><svg class="a" style="left:143px;top:178px" width="17" height="17" viewBox="0 0 17 17"><rect x="1.5" y="5" width="14" height="9" rx="1.5" fill="#fff" stroke="#6f8fb8" stroke-width="1.1"/><circle cx="8.5" cy="9.5" r="3" fill="none" stroke="#6f8fb8"/><rect x="5" y="3" width="5" height="2" fill="#6f8fb8"/></svg><svg class="a" style="left:168px;top:178px" width="17" height="17" viewBox="0 0 17 17"><rect x="1.5" y="5" width="14" height="9" rx="1.5" fill="#fff" stroke="#6f8fb8" stroke-width="1.1"/><circle cx="8.5" cy="9.5" r="3" fill="none" stroke="#6f8fb8"/><rect x="5" y="3" width="5" height="2" fill="#6f8fb8"/><path d="M2,16 Q4,12 8,12" fill="none" stroke="#2a5a90" stroke-width="1.6"/></svg><div class="a" style="left:195.5px;top:175px;width:1px;height:22px;background:#bdbdbd"></div><svg class="a" style="left:203px;top:178px" width="17" height="17" viewBox="0 0 17 17"><polygon points="1,1 8,4 8,15 1,12" fill="#c9d2e0" stroke="#4f78a8"/><polygon points="8,8 12,6 16,8 16,13 12,15 8,13" fill="#fff" stroke="#4f78a8"/></svg><svg class="a" style="left:228px;top:178px" width="17" height="17" viewBox="0 0 17 17"><polygon points="1,1 8,4 8,15 1,12" fill="#c9d2e0" stroke="#4f78a8"/><polygon points="8,8 12,6 16,8 16,13 12,15 8,13" fill="#fff" stroke="#4f78a8"/><path d="M0,16 Q2,12 6,12" fill="none" stroke="#2a5a90" stroke-width="1.6"/></svg><svg class="a" style="left:8px;top:491px" width="17" height="18" viewBox="0 0 17 18"><rect x="1" y="1" width="4" height="4" fill="none" stroke="#4f78a8"/><rect x="1" y="7" width="4" height="4" fill="none" stroke="#4f78a8"/><rect x="1" y="13" width="4" height="4" fill="none" stroke="#4f78a8"/><rect x="11" y="1" width="4" height="16" fill="none" stroke="#4f78a8" stroke-dasharray="1.5,1"/><path d="M5,9H11" stroke="#4f78a8"/></svg><svg class="a" style="left:33px;top:491px" width="17" height="18" viewBox="0 0 17 18"><rect x="1" y="1" width="6" height="16" rx="1" fill="#c9d2e0" stroke="#4f78a8"/><rect x="9" y="1" width="6" height="16" fill="none" stroke="#4f78a8" stroke-dasharray="1.5,1"/><path d="M3,9H13" stroke="#4f78a8"/></svg><svg class="a" style="left:58px;top:491px" width="17" height="18" viewBox="0 0 17 18"><rect x="1" y="1" width="6" height="16" fill="none" stroke="#4f78a8" stroke-dasharray="1.5,1"/><rect x="9" y="1" width="6" height="16" rx="1" fill="#c9d2e0" stroke="#4f78a8"/><path d="M3,9H13" stroke="#4f78a8"/></svg><svg class="a" style="left:84px;top:491px" width="17" height="18" viewBox="0 0 17 18"><polygon points="8,2 14,5 14,12 8,15 2,12 2,5" fill="#fff" stroke="#4f78a8"/><ellipse cx="11" cy="13" rx="4" ry="2.5" fill="#fff" stroke="#4f78a8"/><circle cx="11" cy="13" r="1.3" fill="#245"/></svg><svg class="a" style="left:111px;top:491px" width="12" height="18" viewBox="0 0 12 18"><circle cx="6" cy="3" r="2" fill="none" stroke="#4f78a8" stroke-width="1.3"/><rect x="4" y="6.5" width="4" height="10" rx="2" fill="none" stroke="#4f78a8" stroke-width="1.3"/></svg><svg class="a" style="left:183px;top:514px" width="16" height="15" viewBox="0 0 16 15"><path d="M1,7 Q8,0 15,7 Q8,14 1,7Z" fill="#fff" stroke="#5d7fa8" stroke-width="1.1"/><circle cx="8" cy="7" r="2.8" fill="none" stroke="#5d7fa8" stroke-width="1.1"/><circle cx="8" cy="7" r="1.2" fill="#5d7fa8"/></svg><svg class="a" style="left:212px;top:513px" width="15" height="16" viewBox="0 0 15 16"><polygon points="7.5,1 14,4.5 14,11.5 7.5,15 1,11.5 1,4.5" fill="#6d8bb5" stroke="#2f5585" stroke-width="1"/><path d="M1,4.5L7.5,8L14,4.5M7.5,8V15M4.2,2.8L10.8,6.3M10.8,2.8L4.2,6.3M4.2,6.3V13.2M10.8,6.3V13.2M1,8L7.5,11.5L14,8" fill="none" stroke="#dfe6f0" stroke-width="0.8"/></svg><svg class="a" style="left:240px;top:513px" width="15" height="16" viewBox="0 0 15 16"><path d="M4,7V4.5A3.5,3.5 0 0 1 11,4.5V5" fill="none" stroke="#8a98ab" stroke-width="1.6"/><rect x="1.5" y="7" width="12" height="8" rx="1" fill="#8a98ab"/><rect x="6.5" y="10" width="2" height="3" fill="#dde"/></svg><svg class="a" style="left:183px;top:534px" width="16" height="15" viewBox="0 0 16 15"><path d="M1,7 Q8,0 15,7 Q8,14 1,7Z" fill="#fff" stroke="#5d7fa8" stroke-width="1.1"/><circle cx="8" cy="7" r="2.8" fill="none" stroke="#5d7fa8" stroke-width="1.1"/><circle cx="8" cy="7" r="1.2" fill="#5d7fa8"/></svg><svg class="a" style="left:212px;top:533px" width="15" height="16" viewBox="0 0 15 16"><polygon points="7.5,1 14,4.5 14,11.5 7.5,15 1,11.5 1,4.5" fill="#6d8bb5" stroke="#2f5585" stroke-width="1"/><path d="M1,4.5L7.5,8L14,4.5M7.5,8V15M4.2,2.8L10.8,6.3M10.8,2.8L4.2,6.3M4.2,6.3V13.2M10.8,6.3V13.2M1,8L7.5,11.5L14,8" fill="none" stroke="#dfe6f0" stroke-width="0.8"/></svg><svg class="a" style="left:240px;top:533px" width="15" height="16" viewBox="0 0 15 16"><path d="M4,7V4.5A3.5,3.5 0 0 1 11,4.5V5" fill="none" stroke="#8a98ab" stroke-width="1.6"/><rect x="1.5" y="7" width="12" height="8" rx="1" fill="#8a98ab"/><rect x="6.5" y="10" width="2" height="3" fill="#dde"/></svg><svg class="a" style="left:183px;top:554px" width="16" height="15" viewBox="0 0 16 15"><path d="M1,7 Q8,0 15,7 Q8,14 1,7Z" fill="#fff" stroke="#5d7fa8" stroke-width="1.1"/><circle cx="8" cy="7" r="2.8" fill="none" stroke="#5d7fa8" stroke-width="1.1"/><circle cx="8" cy="7" r="1.2" fill="#5d7fa8"/></svg><svg class="a" style="left:212px;top:553px" width="15" height="16" viewBox="0 0 15 16"><polygon points="7.5,1 14,4.5 14,11.5 7.5,15 1,11.5 1,4.5" fill="#6d8bb5" stroke="#2f5585" stroke-width="1"/><path d="M1,4.5L7.5,8L14,4.5M7.5,8V15M4.2,2.8L10.8,6.3M10.8,2.8L4.2,6.3M4.2,6.3V13.2M10.8,6.3V13.2M1,8L7.5,11.5L14,8" fill="none" stroke="#dfe6f0" stroke-width="0.8"/></svg><svg class="a" style="left:240px;top:553px" width="15" height="16" viewBox="0 0 15 16"><path d="M4,7V4.5A3.5,3.5 0 0 1 11,4.5V5" fill="none" stroke="#8a98ab" stroke-width="1.6"/><rect x="1.5" y="7" width="12" height="8" rx="1" fill="#8a98ab"/><rect x="6.5" y="10" width="2" height="3" fill="#dde"/></svg><svg class="a" style="left:183px;top:574px" width="16" height="15" viewBox="0 0 16 15"><path d="M1,7 Q8,0 15,7 Q8,14 1,7Z" fill="#fff" stroke="#5d7fa8" stroke-width="1.1"/><circle cx="8" cy="7" r="2.8" fill="none" stroke="#5d7fa8" stroke-width="1.1"/><circle cx="8" cy="7" r="1.2" fill="#5d7fa8"/></svg><svg class="a" style="left:212px;top:573px" width="15" height="16" viewBox="0 0 15 16"><polygon points="7.5,1 14,4.5 14,11.5 7.5,15 1,11.5 1,4.5" fill="#6d8bb5" stroke="#2f5585" stroke-width="1"/><path d="M1,4.5L7.5,8L14,4.5M7.5,8V15M4.2,2.8L10.8,6.3M10.8,2.8L4.2,6.3M4.2,6.3V13.2M10.8,6.3V13.2M1,8L7.5,11.5L14,8" fill="none" stroke="#dfe6f0" stroke-width="0.8"/></svg><svg class="a" style="left:240px;top:573px" width="15" height="16" viewBox="0 0 15 16"><path d="M4,7V4.5A3.5,3.5 0 0 1 11,4.5V5" fill="none" stroke="#8a98ab" stroke-width="1.6"/><rect x="1.5" y="7" width="12" height="8" rx="1" fill="#8a98ab"/><rect x="6.5" y="10" width="2" height="3" fill="#dde"/></svg><svg class="a" style="left:183px;top:594px" width="16" height="15" viewBox="0 0 16 15"><path d="M1,7 Q8,0 15,7 Q8,14 1,7Z" fill="#fff" stroke="#5d7fa8" stroke-width="1.1"/><circle cx="8" cy="7" r="2.8" fill="none" stroke="#5d7fa8" stroke-width="1.1"/><circle cx="8" cy="7" r="1.2" fill="#5d7fa8"/></svg><svg class="a" style="left:212px;top:593px" width="15" height="16" viewBox="0 0 15 16"><polygon points="7.5,1 14,4.5 14,11.5 7.5,15 1,11.5 1,4.5" fill="#6d8bb5" stroke="#2f5585" stroke-width="1"/><path d="M1,4.5L7.5,8L14,4.5M7.5,8V15M4.2,2.8L10.8,6.3M10.8,2.8L4.2,6.3M4.2,6.3V13.2M10.8,6.3V13.2M1,8L7.5,11.5L14,8" fill="none" stroke="#dfe6f0" stroke-width="0.8"/></svg><svg class="a" style="left:240px;top:593px" width="15" height="16" viewBox="0 0 15 16"><path d="M4,7V4.5A3.5,3.5 0 0 1 11,4.5V5" fill="none" stroke="#8a98ab" stroke-width="1.6"/><rect x="1.5" y="7" width="12" height="8" rx="1" fill="#8a98ab"/><rect x="6.5" y="10" width="2" height="3" fill="#dde"/></svg><svg class="a" style="left:183px;top:614px" width="16" height="15" viewBox="0 0 16 15"><path d="M1,7 Q8,0 15,7 Q8,14 1,7Z" fill="#fff" stroke="#5d7fa8" stroke-width="1.1"/><circle cx="8" cy="7" r="2.8" fill="none" stroke="#5d7fa8" stroke-width="1.1"/><circle cx="8" cy="7" r="1.2" fill="#5d7fa8"/></svg><svg class="a" style="left:212px;top:613px" width="15" height="16" viewBox="0 0 15 16"><polygon points="7.5,1 14,4.5 14,11.5 7.5,15 1,11.5 1,4.5" fill="#6d8bb5" stroke="#2f5585" stroke-width="1"/><path d="M1,4.5L7.5,8L14,4.5M7.5,8V15M4.2,2.8L10.8,6.3M10.8,2.8L4.2,6.3M4.2,6.3V13.2M10.8,6.3V13.2M1,8L7.5,11.5L14,8" fill="none" stroke="#dfe6f0" stroke-width="0.8"/></svg><svg class="a" style="left:240px;top:613px" width="15" height="16" viewBox="0 0 15 16"><path d="M4,7V4.5A3.5,3.5 0 0 1 11,4.5V5" fill="none" stroke="#8a98ab" stroke-width="1.6"/><rect x="1.5" y="7" width="12" height="8" rx="1" fill="#8a98ab"/><rect x="6.5" y="10" width="2" height="3" fill="#dde"/></svg><svg class="a" style="left:183px;top:634px" width="16" height="15" viewBox="0 0 16 15"><path d="M1,7 Q8,0 15,7 Q8,14 1,7Z" fill="#fff" stroke="#5d7fa8" stroke-width="1.1"/><circle cx="8" cy="7" r="2.8" fill="none" stroke="#5d7fa8" stroke-width="1.1"/><circle cx="8" cy="7" r="1.2" fill="#5d7fa8"/></svg><svg class="a" style="left:212px;top:633px" width="15" height="16" viewBox="0 0 15 16"><polygon points="7.5,1 14,4.5 14,11.5 7.5,15 1,11.5 1,4.5" fill="#6d8bb5" stroke="#2f5585" stroke-width="1"/><path d="M1,4.5L7.5,8L14,4.5M7.5,8V15M4.2,2.8L10.8,6.3M10.8,2.8L4.2,6.3M4.2,6.3V13.2M10.8,6.3V13.2M1,8L7.5,11.5L14,8" fill="none" stroke="#dfe6f0" stroke-width="0.8"/></svg><svg class="a" style="left:240px;top:633px" width="15" height="16" viewBox="0 0 15 16"><path d="M4,7V4.5A3.5,3.5 0 0 1 11,4.5V5" fill="none" stroke="#8a98ab" stroke-width="1.6"/><rect x="1.5" y="7" width="12" height="8" rx="1" fill="#8a98ab"/><rect x="6.5" y="10" width="2" height="3" fill="#dde"/></svg><svg class="a" style="left:183px;top:654px" width="16" height="15" viewBox="0 0 16 15"><path d="M1,7 Q8,0 15,7 Q8,14 1,7Z" fill="#fff" stroke="#5d7fa8" stroke-width="1.1"/><circle cx="8" cy="7" r="2.8" fill="none" stroke="#5d7fa8" stroke-width="1.1"/><circle cx="8" cy="7" r="1.2" fill="#5d7fa8"/></svg><svg class="a" style="left:212px;top:653px" width="15" height="16" viewBox="0 0 15 16"><polygon points="7.5,1 14,4.5 14,11.5 7.5,15 1,11.5 1,4.5" fill="#6d8bb5" stroke="#2f5585" stroke-width="1"/><path d="M1,4.5L7.5,8L14,4.5M7.5,8V15M4.2,2.8L10.8,6.3M10.8,2.8L4.2,6.3M4.2,6.3V13.2M10.8,6.3V13.2M1,8L7.5,11.5L14,8" fill="none" stroke="#dfe6f0" stroke-width="0.8"/></svg><svg class="a" style="left:240px;top:653px" width="15" height="16" viewBox="0 0 15 16"><path d="M4,7V4.5A3.5,3.5 0 0 1 11,4.5V5" fill="none" stroke="#8a98ab" stroke-width="1.6"/><rect x="1.5" y="7" width="12" height="8" rx="1" fill="#8a98ab"/><rect x="6.5" y="10" width="2" height="3" fill="#dde"/></svg><svg class="a" style="left:183px;top:674px" width="16" height="15" viewBox="0 0 16 15"><path d="M1,7 Q8,0 15,7 Q8,14 1,7Z" fill="#fff" stroke="#5d7fa8" stroke-width="1.1"/><circle cx="8" cy="7" r="2.8" fill="none" stroke="#5d7fa8" stroke-width="1.1"/><circle cx="8" cy="7" r="1.2" fill="#5d7fa8"/></svg><svg class="a" style="left:212px;top:673px" width="15" height="16" viewBox="0 0 15 16"><polygon points="7.5,1 14,4.5 14,11.5 7.5,15 1,11.5 1,4.5" fill="#6d8bb5" stroke="#2f5585" stroke-width="1"/><path d="M1,4.5L7.5,8L14,4.5M7.5,8V15M4.2,2.8L10.8,6.3M10.8,2.8L4.2,6.3M4.2,6.3V13.2M10.8,6.3V13.2M1,8L7.5,11.5L14,8" fill="none" stroke="#dfe6f0" stroke-width="0.8"/></svg><svg class="a" style="left:240px;top:673px" width="15" height="16" viewBox="0 0 15 16"><path d="M4,7V4.5A3.5,3.5 0 0 1 11,4.5V5" fill="none" stroke="#8a98ab" stroke-width="1.6"/><rect x="1.5" y="7" width="12" height="8" rx="1" fill="#8a98ab"/><rect x="6.5" y="10" width="2" height="3" fill="#dde"/></svg><svg class="a" style="left:183px;top:694px" width="16" height="15" viewBox="0 0 16 15"><path d="M1,7 Q8,0 15,7 Q8,14 1,7Z" fill="#fff" stroke="#5d7fa8" stroke-width="1.1"/><circle cx="8" cy="7" r="2.8" fill="none" stroke="#5d7fa8" stroke-width="1.1"/><circle cx="8" cy="7" r="1.2" fill="#5d7fa8"/></svg><svg class="a" style="left:212px;top:693px" width="15" height="16" viewBox="0 0 15 16"><polygon points="7.5,1 14,4.5 14,11.5 7.5,15 1,11.5 1,4.5" fill="#6d8bb5" stroke="#2f5585" stroke-width="1"/><path d="M1,4.5L7.5,8L14,4.5M7.5,8V15M4.2,2.8L10.8,6.3M10.8,2.8L4.2,6.3M4.2,6.3V13.2M10.8,6.3V13.2M1,8L7.5,11.5L14,8" fill="none" stroke="#dfe6f0" stroke-width="0.8"/></svg><svg class="a" style="left:240px;top:693px" width="15" height="16" viewBox="0 0 15 16"><path d="M4,7V4.5A3.5,3.5 0 0 1 11,4.5V5" fill="none" stroke="#8a98ab" stroke-width="1.6"/><rect x="1.5" y="7" width="12" height="8" rx="1" fill="#8a98ab"/><rect x="6.5" y="10" width="2" height="3" fill="#dde"/></svg><svg class="a" style="left:183px;top:714px" width="16" height="15" viewBox="0 0 16 15"><path d="M1,7 Q8,0 15,7 Q8,14 1,7Z" fill="#fff" stroke="#5d7fa8" stroke-width="1.1"/><circle cx="8" cy="7" r="2.8" fill="none" stroke="#5d7fa8" stroke-width="1.1"/><circle cx="8" cy="7" r="1.2" fill="#5d7fa8"/></svg><svg class="a" style="left:212px;top:713px" width="15" height="16" viewBox="0 0 15 16"><polygon points="7.5,1 14,4.5 14,11.5 7.5,15 1,11.5 1,4.5" fill="#6d8bb5" stroke="#2f5585" stroke-width="1"/><path d="M1,4.5L7.5,8L14,4.5M7.5,8V15M4.2,2.8L10.8,6.3M10.8,2.8L4.2,6.3M4.2,6.3V13.2M10.8,6.3V13.2M1,8L7.5,11.5L14,8" fill="none" stroke="#dfe6f0" stroke-width="0.8"/></svg><svg class="a" style="left:240px;top:713px" width="15" height="16" viewBox="0 0 15 16"><path d="M4,7V4.5A3.5,3.5 0 0 1 11,4.5V5" fill="none" stroke="#8a98ab" stroke-width="1.6"/><rect x="1.5" y="7" width="12" height="8" rx="1" fill="#8a98ab"/><rect x="6.5" y="10" width="2" height="3" fill="#dde"/></svg><svg class="a" style="left:183px;top:734px" width="16" height="15" viewBox="0 0 16 15"><path d="M1,7 Q8,0 15,7 Q8,14 1,7Z" fill="#fff" stroke="#5d7fa8" stroke-width="1.1"/><circle cx="8" cy="7" r="2.8" fill="none" stroke="#5d7fa8" stroke-width="1.1"/><circle cx="8" cy="7" r="1.2" fill="#5d7fa8"/></svg><svg class="a" style="left:212px;top:733px" width="15" height="16" viewBox="0 0 15 16"><polygon points="7.5,1 14,4.5 14,11.5 7.5,15 1,11.5 1,4.5" fill="#6d8bb5" stroke="#2f5585" stroke-width="1"/><path d="M1,4.5L7.5,8L14,4.5M7.5,8V15M4.2,2.8L10.8,6.3M10.8,2.8L4.2,6.3M4.2,6.3V13.2M10.8,6.3V13.2M1,8L7.5,11.5L14,8" fill="none" stroke="#dfe6f0" stroke-width="0.8"/></svg><svg class="a" style="left:240px;top:733px" width="15" height="16" viewBox="0 0 15 16"><path d="M4,7V4.5A3.5,3.5 0 0 1 11,4.5V5" fill="none" stroke="#8a98ab" stroke-width="1.6"/><rect x="1.5" y="7" width="12" height="8" rx="1" fill="#8a98ab"/><rect x="6.5" y="10" width="2" height="3" fill="#dde"/></svg><svg class="a" style="left:183px;top:754px" width="16" height="15" viewBox="0 0 16 15"><path d="M1,7 Q8,0 15,7 Q8,14 1,7Z" fill="#fff" stroke="#5d7fa8" stroke-width="1.1"/><circle cx="8" cy="7" r="2.8" fill="none" stroke="#5d7fa8" stroke-width="1.1"/><circle cx="8" cy="7" r="1.2" fill="#5d7fa8"/></svg><svg class="a" style="left:212px;top:753px" width="15" height="16" viewBox="0 0 15 16"><polygon points="7.5,1 14,4.5 14,11.5 7.5,15 1,11.5 1,4.5" fill="#6d8bb5" stroke="#2f5585" stroke-width="1"/><path d="M1,4.5L7.5,8L14,4.5M7.5,8V15M4.2,2.8L10.8,6.3M10.8,2.8L4.2,6.3M4.2,6.3V13.2M10.8,6.3V13.2M1,8L7.5,11.5L14,8" fill="none" stroke="#dfe6f0" stroke-width="0.8"/></svg><svg class="a" style="left:240px;top:753px" width="15" height="16" viewBox="0 0 15 16"><path d="M4,7V4.5A3.5,3.5 0 0 1 11,4.5V5" fill="none" stroke="#8a98ab" stroke-width="1.6"/><rect x="1.5" y="7" width="12" height="8" rx="1" fill="#8a98ab"/><rect x="6.5" y="10" width="2" height="3" fill="#dde"/></svg><svg class="a" style="left:183px;top:774px" width="16" height="15" viewBox="0 0 16 15"><path d="M1,7 Q8,0 15,7 Q8,14 1,7Z" fill="#fff" stroke="#5d7fa8" stroke-width="1.1"/><circle cx="8" cy="7" r="2.8" fill="none" stroke="#5d7fa8" stroke-width="1.1"/><circle cx="8" cy="7" r="1.2" fill="#5d7fa8"/></svg><svg class="a" style="left:212px;top:773px" width="15" height="16" viewBox="0 0 15 16"><polygon points="7.5,1 14,4.5 14,11.5 7.5,15 1,11.5 1,4.5" fill="#6d8bb5" stroke="#2f5585" stroke-width="1"/><path d="M1,4.5L7.5,8L14,4.5M7.5,8V15M4.2,2.8L10.8,6.3M10.8,2.8L4.2,6.3M4.2,6.3V13.2M10.8,6.3V13.2M1,8L7.5,11.5L14,8" fill="none" stroke="#dfe6f0" stroke-width="0.8"/></svg><svg class="a" style="left:240px;top:773px" width="15" height="16" viewBox="0 0 15 16"><path d="M4,7V4.5A3.5,3.5 0 0 1 11,4.5V5" fill="none" stroke="#8a98ab" stroke-width="1.6"/><rect x="1.5" y="7" width="12" height="8" rx="1" fill="#8a98ab"/><rect x="6.5" y="10" width="2" height="3" fill="#dde"/></svg><svg class="a" style="left:183px;top:794px" width="16" height="15" viewBox="0 0 16 15"><path d="M1,7 Q8,0 15,7 Q8,14 1,7Z" fill="#fff" stroke="#5d7fa8" stroke-width="1.1"/><circle cx="8" cy="7" r="2.8" fill="none" stroke="#5d7fa8" stroke-width="1.1"/><circle cx="8" cy="7" r="1.2" fill="#5d7fa8"/></svg><svg class="a" style="left:212px;top:793px" width="15" height="16" viewBox="0 0 15 16"><polygon points="7.5,1 14,4.5 14,11.5 7.5,15 1,11.5 1,4.5" fill="#6d8bb5" stroke="#2f5585" stroke-width="1"/><path d="M1,4.5L7.5,8L14,4.5M7.5,8V15M4.2,2.8L10.8,6.3M10.8,2.8L4.2,6.3M4.2,6.3V13.2M10.8,6.3V13.2M1,8L7.5,11.5L14,8" fill="none" stroke="#dfe6f0" stroke-width="0.8"/></svg><svg class="a" style="left:240px;top:793px" width="15" height="16" viewBox="0 0 15 16"><path d="M4,7V4.5A3.5,3.5 0 0 1 11,4.5V5" fill="none" stroke="#8a98ab" stroke-width="1.6"/><rect x="1.5" y="7" width="12" height="8" rx="1" fill="#8a98ab"/><rect x="6.5" y="10" width="2" height="3" fill="#dde"/></svg><svg class="a" style="left:33px;top:513px" width="16" height="17" viewBox="0 0 16 17"><polygon points="8,1 13,3 13,9 8,11 3,9 3,3" fill="#fff" stroke="#4f78a8"/><polygon points="6,7 11,9 11,15 6,17 1,15 1,9" fill="#c9d2e0" stroke="#4f78a8"/></svg><svg class="a" style="left:33px;top:533px" width="16" height="17" viewBox="0 0 16 17"><circle cx="8" cy="3" r="2" fill="#3a6aa0"/><path d="M8,5V9M3,9H13M3,9V12M8,9V12M13,9V12" fill="none" stroke="#4f78a8" stroke-width="1.2"/><circle cx="3" cy="14" r="2" fill="none" stroke="#4f78a8"/><circle cx="8" cy="14" r="2" fill="none" stroke="#4f78a8"/><circle cx="13" cy="14" r="2" fill="none" stroke="#4f78a8"/></svg><svg class="a" style="left:240px;top:900px" width="16" height="15" viewBox="0 0 16 15"><path d="M1,7 Q8,0 15,7 Q8,14 1,7Z" fill="none" stroke="#a8b4c4" stroke-width="1.1"/><circle cx="8" cy="7" r="2.5" fill="none" stroke="#a8b4c4"/><path d="M2,1L15,14" stroke="#a8b4c4" stroke-width="1.3"/></svg><svg class="a" style="left:240px;top:920px" width="16" height="15" viewBox="0 0 16 15"><path d="M1,7 Q8,0 15,7 Q8,14 1,7Z" fill="none" stroke="#a8b4c4" stroke-width="1.1"/><circle cx="8" cy="7" r="2.5" fill="none" stroke="#a8b4c4"/><path d="M2,1L15,14" stroke="#a8b4c4" stroke-width="1.3"/></svg><svg class="a" style="left:247px;top:160px" width="12" height="10" viewBox="0 0 12 10"><path d="M1.5,2L6,6.5L10.5,2" fill="none" stroke="#333" stroke-width="1.7"/></svg><svg class="a" style="left:247px;top:473.5px" width="12" height="10" viewBox="0 0 12 10"><path d="M1.5,2L6,6.5L10.5,2" fill="none" stroke="#333" stroke-width="1.7"/></svg><svg class="a" style="left:125px;top:465.5px" width="16" height="3"><path d="M1,1.5H15" stroke="#9a9a9a" stroke-width="1.5" stroke-dasharray="1.5,2.3"/></svg><svg class="a" style="left:125px;top:875.5px" width="16" height="3"><path d="M1,1.5H15" stroke="#9a9a9a" stroke-width="1.5" stroke-dasharray="1.5,2.3"/></svg><svg class="a" style="left:264.5px;top:552px" width="3" height="16"><path d="M1.5,1V15" stroke="#9a9a9a" stroke-width="1.5" stroke-dasharray="1.5,2.3"/></svg><svg class="a" style="left:1500px;top:160px" width="18" height="18" viewBox="0 0 18 18"><path d="M9,2V10M9,10L2,15M9,10L16,14" stroke="#3a6e8e" stroke-width="1.3" fill="none"/></svg><svg class="a" style="left:1524px;top:160px" width="18" height="18" viewBox="0 0 18 18"><circle cx="9" cy="6.5" r="4" fill="#111"/><path d="M4,9 Q0,13 9,14 Q17,13 14,9" fill="none" stroke="#111" stroke-width="1.3"/><path d="M10,16L13,14L11,12" fill="none" stroke="#111"/></svg><svg class="a" style="left:1548px;top:160px" width="18" height="18" viewBox="0 0 18 18"><circle cx="9" cy="3" r="2" fill="none" stroke="#111" stroke-width="1.2"/><path d="M9,5V16" stroke="#111" stroke-width="1.3"/><ellipse cx="9" cy="11" rx="7.5" ry="3.5" fill="none" stroke="#111" stroke-width="1.2"/></svg><div class="a" style="left:1571.5px;top:157px;width:1px;height:23px;background:#c8c8c8"></div><svg class="a" style="left:1578px;top:160px" width="18" height="18" viewBox="0 0 18 18"><rect x="2.5" y="2.5" width="6" height="12" fill="#a8d0ea" stroke="#111"/><rect x="8.5" y="2.5" width="6" height="12" fill="#f8c8c8" stroke="#e00"/><path d="M8.5,1V16" stroke="#111" stroke-dasharray="1.5,1"/></svg><svg class="a" style="left:1602px;top:160px" width="18" height="18" viewBox="0 0 18 18"><rect x="2.5" y="2.5" width="12" height="12" fill="#a8d0ea" stroke="#111"/><polygon points="2.5,2.5 14.5,2.5 2.5,14.5" fill="#5cf05c"/><path d="M1,16L16,1" stroke="#111" stroke-width="1.2"/></svg><svg class="a" style="left:1626px;top:160px" width="18" height="18" viewBox="0 0 18 18"><rect x="2.5" y="3.5" width="12" height="11" fill="#a8d0ea" stroke="#111" stroke-width="1.2"/><rect x="3" y="4" width="11" height="4" fill="#d0d0f8"/><path d="M1,8.5H16" stroke="#111" stroke-dasharray="1.5,1"/></svg><svg class="a" style="left:1650px;top:160px" width="18" height="18" viewBox="0 0 18 18"><polygon points="9,1 16,4.5 16,13.5 9,17 2,13.5 2,4.5" fill="#88c8e0" stroke="#444" stroke-width="0.8"/><polygon points="9,4 16,7.5 16,10 9,13 2,10 2,7.5" fill="#c0a8e0"/><polygon points="9,8 16,4.5 16,10 9,13" fill="#60c060"/><polygon points="2,4.5 9,1 16,4.5 9,8" fill="#f0a0a0"/></svg><svg class="a" style="left:1674px;top:160px" width="18" height="18" viewBox="0 0 18 18"><path d="M1,9 Q9,1 17,9 Q9,17 1,9Z" fill="#111"/><circle cx="9" cy="9" r="3" fill="#777"/><path d="M3,16L15,2" stroke="#111" stroke-width="1.5"/></svg><div class="a" style="left:1697.5px;top:157px;width:1px;height:23px;background:#c8c8c8"></div><svg class="a" style="left:1704px;top:160px" width="18" height="18" viewBox="0 0 18 18"><text x="1" y="8" font-family="Liberation Sans" font-weight="bold" font-size="8.5" fill="#222">3D</text><circle cx="12" cy="12.5" r="4" fill="none" stroke="#666" stroke-width="1.5" stroke-dasharray="2,1.2"/></svg><svg style="position:absolute;left:270px;top:181px" width="1455" height="788" viewBox="270 181 1455 788">
<defs>
<g id="pn"><polygon points="0,0 1,0 1,1 0,1" fill="#c2c2c2" stroke="#1818a8" stroke-width="1" vector-effect="non-scaling-stroke"/><polygon points="0.04,0.015 0.97,0.015 0.97,0.985 0.04,0.985" fill="#23326a" stroke="#3a3a46" stroke-width="0.9" vector-effect="non-scaling-stroke"/><path d="M0.04,0.120H0.97M0.04,0.231H0.97M0.04,0.342H0.97M0.04,0.453H0.97M0.04,0.564H0.97M0.04,0.675H0.97M0.04,0.786H0.97M0.04,0.897H0.97" stroke="#4d5a88" stroke-width="1.9" vector-effect="non-scaling-stroke" fill="none"/><path d="M0.063,0.015V0.985M0.284,0.015V0.985M0.505,0.015V0.985M0.725,0.015V0.985M0.946,0.015V0.985" stroke="#404d80" stroke-width="1.8" vector-effect="non-scaling-stroke" fill="none"/><path d="M0.173,0.015V0.985M0.394,0.015V0.985M0.615,0.015V0.985M0.835,0.015V0.985" stroke="#2e3a6c" stroke-width="1.2" vector-effect="non-scaling-stroke" fill="none"/><ellipse cx="0.063" cy="0.120" rx="0.013" ry="0.009" fill="#b8bccc"/><ellipse cx="0.284" cy="0.120" rx="0.013" ry="0.009" fill="#b8bccc"/><ellipse cx="0.505" cy="0.120" rx="0.013" ry="0.009" fill="#b8bccc"/><ellipse cx="0.725" cy="0.120" rx="0.013" ry="0.009" fill="#b8bccc"/><ellipse cx="0.946" cy="0.120" rx="0.013" ry="0.009" fill="#b8bccc"/><ellipse cx="0.063" cy="0.231" rx="0.013" ry="0.009" fill="#b8bccc"/><ellipse cx="0.284" cy="0.231" rx="0.013" ry="0.009" fill="#b8bccc"/><ellipse cx="0.505" cy="0.231" rx="0.013" ry="0.009" fill="#b8bccc"/><ellipse cx="0.725" cy="0.231" rx="0.013" ry="0.009" fill="#b8bccc"/><ellipse cx="0.946" cy="0.231" rx="0.013" ry="0.009" fill="#b8bccc"/><ellipse cx="0.063" cy="0.342" rx="0.013" ry="0.009" fill="#b8bccc"/><ellipse cx="0.284" cy="0.342" rx="0.013" ry="0.009" fill="#b8bccc"/><ellipse cx="0.505" cy="0.342" rx="0.013" ry="0.009" fill="#b8bccc"/><ellipse cx="0.725" cy="0.342" rx="0.013" ry="0.009" fill="#b8bccc"/><ellipse cx="0.946" cy="0.342" rx="0.013" ry="0.009" fill="#b8bccc"/><ellipse cx="0.063" cy="0.453" rx="0.013" ry="0.009" fill="#b8bccc"/><ellipse cx="0.284" cy="0.453" rx="0.013" ry="0.009" fill="#b8bccc"/><ellipse cx="0.505" cy="0.453" rx="0.013" ry="0.009" fill="#b8bccc"/><ellipse cx="0.725" cy="0.453" rx="0.013" ry="0.009" fill="#b8bccc"/><ellipse cx="0.946" cy="0.453" rx="0.013" ry="0.009" fill="#b8bccc"/><ellipse cx="0.063" cy="0.564" rx="0.013" ry="0.009" fill="#b8bccc"/><ellipse cx="0.284" cy="0.564" rx="0.013" ry="0.009" fill="#b8bccc"/><ellipse cx="0.505" cy="0.564" rx="0.013" ry="0.009" fill="#b8bccc"/><ellipse cx="0.725" cy="0.564" rx="0.013" ry="0.009" fill="#b8bccc"/><ellipse cx="0.946" cy="0.564" rx="0.013" ry="0.009" fill="#b8bccc"/><ellipse cx="0.063" cy="0.675" rx="0.013" ry="0.009" fill="#b8bccc"/><ellipse cx="0.284" cy="0.675" rx="0.013" ry="0.009" fill="#b8bccc"/><ellipse cx="0.505" cy="0.675" rx="0.013" ry="0.009" fill="#b8bccc"/><ellipse cx="0.725" cy="0.675" rx="0.013" ry="0.009" fill="#b8bccc"/><ellipse cx="0.946" cy="0.675" rx="0.013" ry="0.009" fill="#b8bccc"/><ellipse cx="0.063" cy="0.786" rx="0.013" ry="0.009" fill="#b8bccc"/><ellipse cx="0.284" cy="0.786" rx="0.013" ry="0.009" fill="#b8bccc"/><ellipse cx="0.505" cy="0.786" rx="0.013" ry="0.009" fill="#b8bccc"/><ellipse cx="0.725" cy="0.786" rx="0.013" ry="0.009" fill="#b8bccc"/><ellipse cx="0.946" cy="0.786" rx="0.013" ry="0.009" fill="#b8bccc"/><ellipse cx="0.063" cy="0.897" rx="0.013" ry="0.009" fill="#b8bccc"/><ellipse cx="0.284" cy="0.897" rx="0.013" ry="0.009" fill="#b8bccc"/><ellipse cx="0.505" cy="0.897" rx="0.013" ry="0.009" fill="#b8bccc"/><ellipse cx="0.725" cy="0.897" rx="0.013" ry="0.009" fill="#b8bccc"/><ellipse cx="0.946" cy="0.897" rx="0.013" ry="0.009" fill="#b8bccc"/></g>
</defs>
<rect x="270" y="181" width="1455" height="788" fill="#5b5e63"/>
<polygon points="1598,181 1685,246.4 1685,181" fill="#a6a6a6"/>
<polygon points="1685,181 1725,181 1725,243.5 1685,246.4" fill="#fdfdfd"/>
<polyline points="948,186.4 956,188.5 1285,430.6 1725,397.5" fill="none" stroke="#07088c" stroke-width="2.2" stroke-linejoin="round"/>
<polyline points="1140,342 1275,440.4 1725,404.7" fill="none" stroke="#07088c" stroke-width="2.2" stroke-linejoin="round"/>
<polyline points="1423,533.5 1409,520 1283,446 1725,410.2" fill="none" stroke="#07088c" stroke-width="2.2" stroke-linejoin="round"/>
<polyline points="1307.8,448.7 1725,416.8" fill="none" stroke="#07088c" stroke-width="2.2" stroke-linejoin="round"/>
<use href="#pn" transform="matrix(114.7 -8.9 63.5 160 159 158.7)"/>
<use href="#pn" transform="matrix(114.7 -8.9 63.5 160 274.6 149.7)"/>
<use href="#pn" transform="matrix(114.7 -8.9 63.5 160 390.2 140.7)"/>
<use href="#pn" transform="matrix(114.7 -8.9 63.5 160 505.8 131.7)"/>
<use href="#pn" transform="matrix(114.7 -8.9 63.5 160 621.4 122.7)"/>
<use href="#pn" transform="matrix(114.7 -8.9 63.5 160 737 113.7)"/>
<use href="#pn" transform="matrix(114.7 -8.9 63.5 160 137 237.2)"/>
<use href="#pn" transform="matrix(114.7 -8.9 63.5 160 252.6 228.2)"/>
<use href="#pn" transform="matrix(114.7 -8.9 63.5 160 368.2 219.2)"/>
<use href="#pn" transform="matrix(114.7 -8.9 63.5 160 483.8 210.2)"/>
<use href="#pn" transform="matrix(114.7 -8.9 63.5 160 599.4 201.2)"/>
<use href="#pn" transform="matrix(114.7 -8.9 63.5 160 715 192.2)"/>
<use href="#pn" transform="matrix(114.7 -8.9 63.5 160 830.6 183.2)"/>
<use href="#pn" transform="matrix(114.7 -8.9 63.5 160 115 315.7)"/>
<use href="#pn" transform="matrix(114.7 -8.9 63.5 160 230.6 306.7)"/>
<use href="#pn" transform="matrix(114.7 -8.9 63.5 160 346.2 297.7)"/>
<use href="#pn" transform="matrix(114.7 -8.9 63.5 160 461.8 288.7)"/>
<use href="#pn" transform="matrix(114.7 -8.9 63.5 160 577.4 279.7)"/>
<use href="#pn" transform="matrix(114.7 -8.9 63.5 160 693 270.7)"/>
<use href="#pn" transform="matrix(114.7 -8.9 63.5 160 808.6 261.7)"/>
<use href="#pn" transform="matrix(114.7 -8.9 63.5 160 924.2 252.7)"/>
<use href="#pn" transform="matrix(114.7 -8.9 63.5 160 93 394.2)"/>
<use href="#pn" transform="matrix(114.7 -8.9 63.5 160 208.6 385.2)"/>
<use href="#pn" transform="matrix(114.7 -8.9 63.5 160 324.2 376.2)"/>
<use href="#pn" transform="matrix(114.7 -8.9 63.5 160 439.8 367.2)"/>
<use href="#pn" transform="matrix(114.7 -8.9 63.5 160 555.4 358.2)"/>
<use href="#pn" transform="matrix(114.7 -8.9 63.5 160 671 349.2)"/>
<use href="#pn" transform="matrix(114.7 -8.9 63.5 160 786.6 340.2)"/>
<use href="#pn" transform="matrix(114.7 -8.9 63.5 160 902.2 331.2)"/>
<use href="#pn" transform="matrix(114.7 -8.9 63.5 160 1017.8 322.2)"/>
<use href="#pn" transform="matrix(114.7 -8.9 63.5 160 186.6 463.7)"/>
<use href="#pn" transform="matrix(114.7 -8.9 63.5 160 302.2 454.7)"/>
<use href="#pn" transform="matrix(114.7 -8.9 63.5 160 417.8 445.7)"/>
<use href="#pn" transform="matrix(114.7 -8.9 63.5 160 533.4 436.7)"/>
<use href="#pn" transform="matrix(114.7 -8.9 63.5 160 649 427.7)"/>
<use href="#pn" transform="matrix(114.7 -8.9 63.5 160 764.6 418.7)"/>
<use href="#pn" transform="matrix(114.7 -8.9 63.5 160 880.2 409.7)"/>
<use href="#pn" transform="matrix(114.7 -8.9 63.5 160 995.8 400.7)"/>
<use href="#pn" transform="matrix(114.7 -8.9 63.5 160 1111.4 391.7)"/>
<use href="#pn" transform="matrix(114.7 -8.9 63.5 160 280.2 533.2)"/>
<use href="#pn" transform="matrix(114.7 -8.9 63.5 160 395.8 524.2)"/>
<use href="#pn" transform="matrix(114.7 -8.9 63.5 160 511.4 515.2)"/>
<use href="#pn" transform="matrix(114.7 -8.9 63.5 160 627 506.2)"/>
<use href="#pn" transform="matrix(114.7 -8.9 63.5 160 742.6 497.2)"/>
<use href="#pn" transform="matrix(114.7 -8.9 63.5 160 858.2 488.2)"/>
<use href="#pn" transform="matrix(114.7 -8.9 63.5 160 973.8 479.2)"/>
<use href="#pn" transform="matrix(114.7 -8.9 63.5 160 1089.4 470.2)"/>
<use href="#pn" transform="matrix(114.7 -8.9 63.5 160 1205 461.2)"/>
<use href="#pn" transform="matrix(114.7 -8.9 63.5 160 373.8 602.7)"/>
<use href="#pn" transform="matrix(114.7 -8.9 63.5 160 489.4 593.7)"/>
<use href="#pn" transform="matrix(114.7 -8.9 63.5 160 605 584.7)"/>
<use href="#pn" transform="matrix(114.7 -8.9 63.5 160 720.6 575.7)"/>
<use href="#pn" transform="matrix(114.7 -8.9 63.5 160 836.2 566.7)"/>
<use href="#pn" transform="matrix(114.7 -8.9 63.5 160 951.8 557.7)"/>
<use href="#pn" transform="matrix(114.7 -8.9 63.5 160 1067.4 548.7)"/>
<use href="#pn" transform="matrix(114.7 -8.9 63.5 160 1183 539.7)"/>
<use href="#pn" transform="matrix(114.7 -8.9 63.5 160 1298.6 530.7)"/>
<use href="#pn" transform="matrix(114.7 -8.9 63.5 160 467.4 672.2)"/>
<use href="#pn" transform="matrix(114.7 -8.9 63.5 160 583 663.2)"/>
<use href="#pn" transform="matrix(114.7 -8.9 63.5 160 698.6 654.2)"/>
<use href="#pn" transform="matrix(114.7 -8.9 63.5 160 814.2 645.2)"/>
<use href="#pn" transform="matrix(114.7 -8.9 63.5 160 929.8 636.2)"/>
<use href="#pn" transform="matrix(114.7 -8.9 63.5 160 1045.4 627.2)"/>
<use href="#pn" transform="matrix(114.7 -8.9 63.5 160 1161 618.2)"/>
<use href="#pn" transform="matrix(114.7 -8.9 63.5 160 1276.6 609.2)"/>
<use href="#pn" transform="matrix(114.7 -8.9 63.5 160 1392.2 600.2)"/>
<use href="#pn" transform="matrix(114.7 -8.9 63.5 160 561 741.7)"/>
<use href="#pn" transform="matrix(114.7 -8.9 63.5 160 676.6 732.7)"/>
<use href="#pn" transform="matrix(114.7 -8.9 63.5 160 792.2 723.7)"/>
<use href="#pn" transform="matrix(114.7 -8.9 63.5 160 907.8 714.7)"/>
<use href="#pn" transform="matrix(114.7 -8.9 63.5 160 1023.4 705.7)"/>
<use href="#pn" transform="matrix(114.7 -8.9 63.5 160 1139 696.7)"/>
<use href="#pn" transform="matrix(114.7 -8.9 63.5 160 1254.6 687.7)"/>
<use href="#pn" transform="matrix(114.7 -8.9 63.5 160 1370.2 678.7)"/>
<use href="#pn" transform="matrix(114.7 -8.9 63.5 160 1485.8 669.7)"/>
<use href="#pn" transform="matrix(114.7 -8.9 63.5 160 1601.4 660.7)"/>
<use href="#pn" transform="matrix(114.7 -8.9 63.5 160 1717 651.7)"/>
<polygon points="270,625.4 590.4,864.4 1725,775.9 1725,784 569,873.5 270,651.9" fill="#8d8d8d"/>
<polyline points="270,625.4 590.4,864.4 1725,775.9" fill="none" stroke="#4f4f4f" stroke-width="1"/>
<polyline points="270,651.9 569,873.5 1725,784" fill="none" stroke="#6a6a6a" stroke-width="0.8"/>
<polygon points="270,651.9 569,873.5 569,969 270,969" fill="#a9a9a9"/>
<line x1="569" y1="873.5" x2="569" y2="925" stroke="#6d6d6d" stroke-width="1"/>
<polygon points="569,873.5 1725,784 1725,969 569,969" fill="#ffffff"/>
<rect x="228.3" y="692.4" width="44" height="7.2" fill="#b3b3b3"/>
<line x1="228.3" y1="692.4" x2="272.3" y2="692.4" stroke="#4e4e4e" stroke-width="1.3"/>
<rect x="228.3" y="698.0" width="44" height="1.6" fill="#747474"/>
<rect x="238.1" y="699.6" width="44" height="7.2" fill="#b3b3b3"/>
<line x1="238.1" y1="699.6" x2="282.1" y2="699.6" stroke="#4e4e4e" stroke-width="1.3"/>
<rect x="238.1" y="705.2" width="44" height="1.6" fill="#747474"/>
<rect x="247.8" y="706.8" width="44" height="7.2" fill="#b3b3b3"/>
<line x1="247.8" y1="706.8" x2="291.8" y2="706.8" stroke="#4e4e4e" stroke-width="1.3"/>
<rect x="247.8" y="712.4" width="44" height="1.6" fill="#747474"/>
<rect x="257.6" y="714.0" width="44" height="7.2" fill="#b3b3b3"/>
<line x1="257.6" y1="714.0" x2="301.6" y2="714.0" stroke="#4e4e4e" stroke-width="1.3"/>
<rect x="257.6" y="719.6" width="44" height="1.6" fill="#747474"/>
<rect x="267.3" y="721.2" width="44" height="7.2" fill="#b3b3b3"/>
<line x1="267.3" y1="721.2" x2="311.3" y2="721.2" stroke="#4e4e4e" stroke-width="1.3"/>
<rect x="267.3" y="726.8" width="44" height="1.6" fill="#747474"/>
<rect x="277.1" y="728.4" width="44" height="7.2" fill="#b3b3b3"/>
<line x1="277.1" y1="728.4" x2="321.1" y2="728.4" stroke="#4e4e4e" stroke-width="1.3"/>
<rect x="277.1" y="734.0" width="44" height="1.6" fill="#747474"/>
<rect x="286.8" y="735.6" width="44" height="7.2" fill="#b3b3b3"/>
<line x1="286.8" y1="735.6" x2="330.8" y2="735.6" stroke="#4e4e4e" stroke-width="1.3"/>
<rect x="286.8" y="741.2" width="44" height="1.6" fill="#747474"/>
<rect x="296.6" y="742.8" width="44" height="7.2" fill="#b3b3b3"/>
<line x1="296.6" y1="742.8" x2="340.6" y2="742.8" stroke="#4e4e4e" stroke-width="1.3"/>
<rect x="296.6" y="748.4" width="44" height="1.6" fill="#747474"/>
<rect x="306.3" y="750.0" width="44" height="7.2" fill="#b3b3b3"/>
<line x1="306.3" y1="750.0" x2="350.3" y2="750.0" stroke="#4e4e4e" stroke-width="1.3"/>
<rect x="306.3" y="755.6" width="44" height="1.6" fill="#747474"/>
<rect x="316.1" y="757.2" width="44" height="7.2" fill="#b3b3b3"/>
<line x1="316.1" y1="757.2" x2="360.1" y2="757.2" stroke="#4e4e4e" stroke-width="1.3"/>
<rect x="316.1" y="762.8" width="44" height="1.6" fill="#747474"/>
<rect x="325.8" y="764.4" width="44" height="7.2" fill="#b3b3b3"/>
<line x1="325.8" y1="764.4" x2="369.8" y2="764.4" stroke="#4e4e4e" stroke-width="1.3"/>
<rect x="325.8" y="770.0" width="44" height="1.6" fill="#747474"/>
<rect x="335.6" y="771.6" width="44" height="7.2" fill="#b3b3b3"/>
<line x1="335.6" y1="771.6" x2="379.6" y2="771.6" stroke="#4e4e4e" stroke-width="1.3"/>
<rect x="335.6" y="777.2" width="44" height="1.6" fill="#747474"/>
<rect x="345.3" y="778.8" width="44" height="7.2" fill="#b3b3b3"/>
<line x1="345.3" y1="778.8" x2="389.3" y2="778.8" stroke="#4e4e4e" stroke-width="1.3"/>
<rect x="345.3" y="784.4" width="44" height="1.6" fill="#747474"/>
<rect x="355.1" y="786.0" width="44" height="7.2" fill="#b3b3b3"/>
<line x1="355.1" y1="786.0" x2="399.1" y2="786.0" stroke="#4e4e4e" stroke-width="1.3"/>
<rect x="355.1" y="791.6" width="44" height="1.6" fill="#747474"/>
<rect x="364.8" y="793.2" width="44" height="7.2" fill="#b3b3b3"/>
<line x1="364.8" y1="793.2" x2="408.8" y2="793.2" stroke="#4e4e4e" stroke-width="1.3"/>
<rect x="364.8" y="798.8" width="44" height="1.6" fill="#747474"/>
<rect x="374.6" y="800.4" width="44" height="7.2" fill="#b3b3b3"/>
<line x1="374.6" y1="800.4" x2="418.6" y2="800.4" stroke="#4e4e4e" stroke-width="1.3"/>
<rect x="374.6" y="806.0" width="44" height="1.6" fill="#747474"/>
<rect x="384.3" y="807.6" width="44" height="7.2" fill="#b3b3b3"/>
<line x1="384.3" y1="807.6" x2="428.3" y2="807.6" stroke="#4e4e4e" stroke-width="1.3"/>
<rect x="384.3" y="813.2" width="44" height="1.6" fill="#747474"/>
<rect x="394.1" y="814.8" width="44" height="7.2" fill="#b3b3b3"/>
<line x1="394.1" y1="814.8" x2="438.1" y2="814.8" stroke="#4e4e4e" stroke-width="1.3"/>
<rect x="394.1" y="820.4" width="44" height="1.6" fill="#747474"/>
<rect x="403.8" y="822.0" width="44" height="7.2" fill="#b3b3b3"/>
<line x1="403.8" y1="822.0" x2="447.8" y2="822.0" stroke="#4e4e4e" stroke-width="1.3"/>
<rect x="403.8" y="827.6" width="44" height="1.6" fill="#747474"/>
<rect x="413.6" y="829.2" width="44" height="7.2" fill="#b3b3b3"/>
<line x1="413.6" y1="829.2" x2="457.6" y2="829.2" stroke="#4e4e4e" stroke-width="1.3"/>
<rect x="413.6" y="834.8" width="44" height="1.6" fill="#747474"/>
<rect x="423.3" y="836.4" width="44" height="7.2" fill="#b3b3b3"/>
<line x1="423.3" y1="836.4" x2="467.3" y2="836.4" stroke="#4e4e4e" stroke-width="1.3"/>
<rect x="423.3" y="842.0" width="44" height="1.6" fill="#747474"/>
<rect x="433.1" y="843.6" width="44" height="7.2" fill="#b3b3b3"/>
<line x1="433.1" y1="843.6" x2="477.1" y2="843.6" stroke="#4e4e4e" stroke-width="1.3"/>
<rect x="433.1" y="849.2" width="44" height="1.6" fill="#747474"/>
<rect x="442.8" y="850.8" width="44" height="7.2" fill="#b3b3b3"/>
<line x1="442.8" y1="850.8" x2="486.8" y2="850.8" stroke="#4e4e4e" stroke-width="1.3"/>
<rect x="442.8" y="856.4" width="44" height="1.6" fill="#747474"/>
<rect x="452.6" y="858.0" width="44" height="7.2" fill="#b3b3b3"/>
<line x1="452.6" y1="858.0" x2="496.6" y2="858.0" stroke="#4e4e4e" stroke-width="1.3"/>
<rect x="452.6" y="863.6" width="44" height="1.6" fill="#747474"/>
<rect x="462.3" y="865.2" width="44" height="7.2" fill="#b3b3b3"/>
<line x1="462.3" y1="865.2" x2="506.3" y2="865.2" stroke="#4e4e4e" stroke-width="1.3"/>
<rect x="462.3" y="870.8" width="44" height="1.6" fill="#747474"/>
<rect x="472.0" y="872.4" width="44" height="7.2" fill="#b3b3b3"/>
<line x1="472.0" y1="872.4" x2="516.0" y2="872.4" stroke="#4e4e4e" stroke-width="1.3"/>
<rect x="472.0" y="878.0" width="44" height="1.6" fill="#747474"/>
<rect x="481.8" y="879.6" width="44" height="7.2" fill="#b3b3b3"/>
<line x1="481.8" y1="879.6" x2="525.8" y2="879.6" stroke="#4e4e4e" stroke-width="1.3"/>
<rect x="481.8" y="885.2" width="44" height="1.6" fill="#747474"/>
<rect x="491.5" y="886.8" width="44" height="7.2" fill="#b3b3b3"/>
<line x1="491.5" y1="886.8" x2="535.5" y2="886.8" stroke="#4e4e4e" stroke-width="1.3"/>
<rect x="491.5" y="892.4" width="44" height="1.6" fill="#747474"/>
<rect x="501.3" y="894.0" width="44" height="7.2" fill="#b3b3b3"/>
<line x1="501.3" y1="894.0" x2="545.3" y2="894.0" stroke="#4e4e4e" stroke-width="1.3"/>
<rect x="501.3" y="899.6" width="44" height="1.6" fill="#747474"/>
<rect x="511.0" y="901.2" width="44" height="7.2" fill="#b3b3b3"/>
<line x1="511.0" y1="901.2" x2="555.0" y2="901.2" stroke="#4e4e4e" stroke-width="1.3"/>
<rect x="511.0" y="906.8" width="44" height="1.6" fill="#747474"/>
<rect x="266.3" y="728.2" width="2.8" height="240.8" fill="#5c5c5c"/>
<rect x="269.1" y="728.2" width="1.6" height="240.8" fill="#8c8c8c"/>
<rect x="276.1" y="735.4" width="2.8" height="233.6" fill="#5c5c5c"/>
<rect x="278.9" y="735.4" width="1.6" height="233.6" fill="#8c8c8c"/>
<rect x="285.8" y="742.6" width="2.8" height="226.4" fill="#5c5c5c"/>
<rect x="288.6" y="742.6" width="1.6" height="226.4" fill="#8c8c8c"/>
<rect x="295.6" y="749.8" width="2.8" height="219.2" fill="#5c5c5c"/>
<rect x="298.4" y="749.8" width="1.6" height="219.2" fill="#8c8c8c"/>
<rect x="305.3" y="757.0" width="2.8" height="212.0" fill="#5c5c5c"/>
<rect x="308.1" y="757.0" width="1.6" height="212.0" fill="#8c8c8c"/>
<rect x="315.1" y="764.2" width="2.8" height="204.8" fill="#5c5c5c"/>
<rect x="317.9" y="764.2" width="1.6" height="204.8" fill="#8c8c8c"/>
<rect x="324.8" y="771.4" width="2.8" height="197.6" fill="#5c5c5c"/>
<rect x="327.6" y="771.4" width="1.6" height="197.6" fill="#8c8c8c"/>
<rect x="334.6" y="778.6" width="2.8" height="190.4" fill="#5c5c5c"/>
<rect x="337.4" y="778.6" width="1.6" height="190.4" fill="#8c8c8c"/>
<rect x="344.3" y="785.8" width="2.8" height="183.2" fill="#5c5c5c"/>
<rect x="347.1" y="785.8" width="1.6" height="183.2" fill="#8c8c8c"/>
<rect x="354.1" y="793.0" width="2.8" height="176.0" fill="#5c5c5c"/>
<rect x="356.9" y="793.0" width="1.6" height="176.0" fill="#8c8c8c"/>
<rect x="363.8" y="800.2" width="2.8" height="168.8" fill="#5c5c5c"/>
<rect x="366.6" y="800.2" width="1.6" height="168.8" fill="#8c8c8c"/>
<rect x="373.6" y="807.4" width="2.8" height="161.6" fill="#5c5c5c"/>
<rect x="376.4" y="807.4" width="1.6" height="161.6" fill="#8c8c8c"/>
<rect x="383.3" y="814.6" width="2.8" height="154.4" fill="#5c5c5c"/>
<rect x="386.1" y="814.6" width="1.6" height="154.4" fill="#8c8c8c"/>
<rect x="393.1" y="821.8" width="2.8" height="147.2" fill="#5c5c5c"/>
<rect x="395.9" y="821.8" width="1.6" height="147.2" fill="#8c8c8c"/>
<rect x="402.8" y="829.0" width="2.8" height="140.0" fill="#5c5c5c"/>
<rect x="405.6" y="829.0" width="1.6" height="140.0" fill="#8c8c8c"/>
<rect x="412.6" y="836.2" width="2.8" height="132.8" fill="#5c5c5c"/>
<rect x="415.4" y="836.2" width="1.6" height="132.8" fill="#8c8c8c"/>
<rect x="422.3" y="843.4" width="2.8" height="125.6" fill="#5c5c5c"/>
<rect x="425.1" y="843.4" width="1.6" height="125.6" fill="#8c8c8c"/>
<rect x="432.1" y="850.6" width="2.8" height="118.4" fill="#5c5c5c"/>
<rect x="434.9" y="850.6" width="1.6" height="118.4" fill="#8c8c8c"/>
<rect x="441.8" y="857.8" width="2.8" height="111.2" fill="#5c5c5c"/>
<rect x="444.6" y="857.8" width="1.6" height="111.2" fill="#8c8c8c"/>
<rect x="451.6" y="865.0" width="2.8" height="104.0" fill="#5c5c5c"/>
<rect x="454.4" y="865.0" width="1.6" height="104.0" fill="#8c8c8c"/>
<rect x="461.3" y="872.2" width="2.8" height="96.8" fill="#5c5c5c"/>
<rect x="464.1" y="872.2" width="1.6" height="96.8" fill="#8c8c8c"/>
<rect x="471.0" y="879.4" width="2.8" height="89.6" fill="#5c5c5c"/>
<rect x="473.8" y="879.4" width="1.6" height="89.6" fill="#8c8c8c"/>
<rect x="480.8" y="886.6" width="2.8" height="82.4" fill="#5c5c5c"/>
<rect x="483.6" y="886.6" width="1.6" height="82.4" fill="#8c8c8c"/>
<rect x="490.5" y="893.8" width="2.8" height="75.2" fill="#5c5c5c"/>
<rect x="493.3" y="893.8" width="1.6" height="75.2" fill="#8c8c8c"/>
<rect x="500.3" y="901.0" width="2.8" height="68.0" fill="#5c5c5c"/>
<rect x="503.1" y="901.0" width="1.6" height="68.0" fill="#8c8c8c"/>
<rect x="510.0" y="908.2" width="2.8" height="60.8" fill="#5c5c5c"/>
<rect x="512.8" y="908.2" width="1.6" height="60.8" fill="#8c8c8c"/>
<polygon points="270,737 540,932.8 540,941 270,745.2" fill="#6e6e6e" opacity="0.9"/>
<polygon points="270,945 306,969 292,969 270,954" fill="#6a6a6a"/>
<polygon points="570.6,913.3 582,913 591.5,923 579,923.5" fill="#4d4d4d"/>
<rect x="539" y="923" width="52.5" height="46" fill="#a4a4a4" stroke="#5a5a5a" stroke-width="1"/>
<polygon points="599.2,911.5 611.8,920.7 611.8,969 599.2,969" fill="#636363"/>
<polygon points="599.2,911.5 608.2,910.9 621.5,919.9 611.8,920.7" fill="#4a4a4a"/>
<polygon points="628.9,909.2 641.5,918.4 641.5,969 628.9,969" fill="#636363"/>
<polygon points="628.9,909.2 637.9,908.6 651.2,917.6 641.5,918.4" fill="#4a4a4a"/>
<polygon points="658.6,906.8 671.2,916.0 671.2,969 658.6,969" fill="#636363"/>
<polygon points="658.6,906.8 667.6,906.2 680.9,915.2 671.2,916.0" fill="#4a4a4a"/>
<polygon points="688.3,904.5 700.9,913.7 700.9,969 688.3,969" fill="#636363"/>
<polygon points="688.3,904.5 697.3,903.9 710.6,912.9 700.9,913.7" fill="#4a4a4a"/>
<polygon points="718.0,902.1 730.6,911.3 730.6,969 718.0,969" fill="#636363"/>
<polygon points="718.0,902.1 727.0,901.5 740.3,910.5 730.6,911.3" fill="#4a4a4a"/>
<polygon points="747.7,899.8 760.3,909.0 760.3,969 747.7,969" fill="#636363"/>
<polygon points="747.7,899.8 756.7,899.2 770.0,908.2 760.3,909.0" fill="#4a4a4a"/>
<polygon points="777.4,897.4 790.0,906.6 790.0,969 777.4,969" fill="#636363"/>
<polygon points="777.4,897.4 786.4,896.8 799.7,905.8 790.0,906.6" fill="#4a4a4a"/>
<polygon points="807.1,895.1 819.7,904.3 819.7,969 807.1,969" fill="#636363"/>
<polygon points="807.1,895.1 816.1,894.5 829.4,903.5 819.7,904.3" fill="#4a4a4a"/>
<polygon points="836.8,892.7 849.4,901.9 849.4,969 836.8,969" fill="#636363"/>
<polygon points="836.8,892.7 845.8,892.1 859.1,901.1 849.4,901.9" fill="#4a4a4a"/>
<polygon points="866.5,890.4 879.1,899.6 879.1,969 866.5,969" fill="#636363"/>
<polygon points="866.5,890.4 875.5,889.8 888.8,898.8 879.1,899.6" fill="#4a4a4a"/>
<polygon points="896.2,888.0 908.8,897.2 908.8,969 896.2,969" fill="#636363"/>
<polygon points="896.2,888.0 905.2,887.4 918.5,896.4 908.8,897.2" fill="#4a4a4a"/>
<polygon points="925.9,885.7 938.5,894.9 938.5,969 925.9,969" fill="#636363"/>
<polygon points="925.9,885.7 934.9,885.1 948.2,894.1 938.5,894.9" fill="#4a4a4a"/>
<polygon points="955.6,883.3 968.2,892.5 968.2,969 955.6,969" fill="#636363"/>
<polygon points="955.6,883.3 964.6,882.7 977.9,891.7 968.2,892.5" fill="#4a4a4a"/>
<polygon points="985.3,881.0 997.9,890.2 997.9,969 985.3,969" fill="#636363"/>
<polygon points="985.3,881.0 994.3,880.4 1007.6,889.4 997.9,890.2" fill="#4a4a4a"/>
<polygon points="1015.0,878.7 1027.6,887.9 1027.6,969 1015.0,969" fill="#636363"/>
<polygon points="1015.0,878.7 1024.0,878.1 1037.3,887.1 1027.6,887.9" fill="#4a4a4a"/>
<polygon points="1044.7,876.3 1057.3,885.5 1057.3,969 1044.7,969" fill="#636363"/>
<polygon points="1044.7,876.3 1053.7,875.7 1067.0,884.7 1057.3,885.5" fill="#4a4a4a"/>
<polygon points="1074.4,874.0 1087.0,883.2 1087.0,969 1074.4,969" fill="#636363"/>
<polygon points="1074.4,874.0 1083.4,873.4 1096.7,882.4 1087.0,883.2" fill="#4a4a4a"/>
<polygon points="1104.1,871.6 1116.7,880.8 1116.7,969 1104.1,969" fill="#636363"/>
<polygon points="1104.1,871.6 1113.1,871.0 1126.4,880.0 1116.7,880.8" fill="#4a4a4a"/>
<polygon points="1133.8,869.3 1146.4,878.5 1146.4,969 1133.8,969" fill="#636363"/>
<polygon points="1133.8,869.3 1142.8,868.7 1156.1,877.7 1146.4,878.5" fill="#4a4a4a"/>
<polygon points="1163.5,866.9 1176.1,876.1 1176.1,969 1163.5,969" fill="#636363"/>
<polygon points="1163.5,866.9 1172.5,866.3 1185.8,875.3 1176.1,876.1" fill="#4a4a4a"/>
<polygon points="1193.2,864.6 1205.8,873.8 1205.8,969 1193.2,969" fill="#636363"/>
<polygon points="1193.2,864.6 1202.2,864.0 1215.5,873.0 1205.8,873.8" fill="#4a4a4a"/>
<polygon points="1222.9,862.2 1235.5,871.4 1235.5,969 1222.9,969" fill="#636363"/>
<polygon points="1222.9,862.2 1231.9,861.6 1245.2,870.6 1235.5,871.4" fill="#4a4a4a"/>
<polygon points="1252.6,859.9 1265.2,869.1 1265.2,969 1252.6,969" fill="#636363"/>
<polygon points="1252.6,859.9 1261.6,859.3 1274.9,868.3 1265.2,869.1" fill="#4a4a4a"/>
<polygon points="1282.3,857.5 1294.9,866.7 1294.9,969 1282.3,969" fill="#636363"/>
<polygon points="1282.3,857.5 1291.3,856.9 1304.6,865.9 1294.9,866.7" fill="#4a4a4a"/>
<polygon points="1312.0,855.2 1324.6,864.4 1324.6,969 1312.0,969" fill="#636363"/>
<polygon points="1312.0,855.2 1321.0,854.6 1334.3,863.6 1324.6,864.4" fill="#4a4a4a"/>
<polygon points="1341.7,852.8 1354.3,862.0 1354.3,969 1341.7,969" fill="#636363"/>
<polygon points="1341.7,852.8 1350.7,852.2 1364.0,861.2 1354.3,862.0" fill="#4a4a4a"/>
<polygon points="1371.4,850.5 1384.0,859.7 1384.0,969 1371.4,969" fill="#636363"/>
<polygon points="1371.4,850.5 1380.4,849.9 1393.7,858.9 1384.0,859.7" fill="#4a4a4a"/>
<polygon points="1401.1,848.1 1413.7,857.3 1413.7,969 1401.1,969" fill="#636363"/>
<polygon points="1401.1,848.1 1410.1,847.5 1423.4,856.5 1413.7,857.3" fill="#4a4a4a"/>
<polygon points="1430.8,845.8 1443.4,855.0 1443.4,969 1430.8,969" fill="#636363"/>
<polygon points="1430.8,845.8 1439.8,845.2 1453.1,854.2 1443.4,855.0" fill="#4a4a4a"/>
<polygon points="1460.5,843.5 1473.1,852.7 1473.1,969 1460.5,969" fill="#636363"/>
<polygon points="1460.5,843.5 1469.5,842.9 1482.8,851.9 1473.1,852.7" fill="#4a4a4a"/>
<polygon points="1490.2,841.1 1502.8,850.3 1502.8,969 1490.2,969" fill="#636363"/>
<polygon points="1490.2,841.1 1499.2,840.5 1512.5,849.5 1502.8,850.3" fill="#4a4a4a"/>
<polygon points="1519.9,838.8 1532.5,848.0 1532.5,969 1519.9,969" fill="#636363"/>
<polygon points="1519.9,838.8 1528.9,838.2 1542.2,847.2 1532.5,848.0" fill="#4a4a4a"/>
<polygon points="1549.6,836.4 1562.2,845.6 1562.2,969 1549.6,969" fill="#636363"/>
<polygon points="1549.6,836.4 1558.6,835.8 1571.9,844.8 1562.2,845.6" fill="#4a4a4a"/>
<polygon points="1579.3,834.1 1591.9,843.3 1591.9,969 1579.3,969" fill="#636363"/>
<polygon points="1579.3,834.1 1588.3,833.5 1601.6,842.5 1591.9,843.3" fill="#4a4a4a"/>
<polygon points="1609.0,831.7 1621.6,840.9 1621.6,969 1609.0,969" fill="#636363"/>
<polygon points="1609.0,831.7 1618.0,831.1 1631.3,840.1 1621.6,840.9" fill="#4a4a4a"/>
<polygon points="1638.7,829.4 1651.3,838.6 1651.3,969 1638.7,969" fill="#636363"/>
<polygon points="1638.7,829.4 1647.7,828.8 1661.0,837.8 1651.3,838.6" fill="#4a4a4a"/>
<polygon points="1668.4,827.0 1681.0,836.2 1681.0,969 1668.4,969" fill="#636363"/>
<polygon points="1668.4,827.0 1677.4,826.4 1690.7,835.4 1681.0,836.2" fill="#4a4a4a"/>
<polygon points="1698.1,824.7 1710.7,833.9 1710.7,969 1698.1,969" fill="#636363"/>
<polygon points="1698.1,824.7 1707.1,824.1 1720.4,833.1 1710.7,833.9" fill="#4a4a4a"/>
<polygon points="1727.8,822.3 1740.4,831.5 1740.4,969 1727.8,969" fill="#636363"/>
<polygon points="1727.8,822.3 1736.8,821.7 1750.1,830.7 1740.4,831.5" fill="#4a4a4a"/>
<polygon points="592,931.5 1725,843 1725,852.7 592,941.2" fill="#aaaaaa" stroke="#6a6a6a" stroke-width="0.6"/>
<polygon points="611.8,920.7 621.5,919.9 621.5,969 611.8,969" fill="#a3a3a3" stroke="#555" stroke-width="0.6"/>
<polygon points="641.5,918.4 651.2,917.6 651.2,969 641.5,969" fill="#a3a3a3" stroke="#555" stroke-width="0.6"/>
<polygon points="671.2,916.0 680.9,915.2 680.9,969 671.2,969" fill="#a3a3a3" stroke="#555" stroke-width="0.6"/>
<polygon points="700.9,913.7 710.6,912.9 710.6,969 700.9,969" fill="#a3a3a3" stroke="#555" stroke-width="0.6"/>
<polygon points="730.6,911.3 740.3,910.5 740.3,969 730.6,969" fill="#a3a3a3" stroke="#555" stroke-width="0.6"/>
<polygon points="760.3,909.0 770.0,908.2 770.0,969 760.3,969" fill="#a3a3a3" stroke="#555" stroke-width="0.6"/>
<polygon points="790.0,906.6 799.7,905.8 799.7,969 790.0,969" fill="#a3a3a3" stroke="#555" stroke-width="0.6"/>
<polygon points="819.7,904.3 829.4,903.5 829.4,969 819.7,969" fill="#a3a3a3" stroke="#555" stroke-width="0.6"/>
<polygon points="849.4,901.9 859.1,901.1 859.1,969 849.4,969" fill="#a3a3a3" stroke="#555" stroke-width="0.6"/>
<polygon points="879.1,899.6 888.8,898.8 888.8,969 879.1,969" fill="#a3a3a3" stroke="#555" stroke-width="0.6"/>
<polygon points="908.8,897.2 918.5,896.4 918.5,969 908.8,969" fill="#a3a3a3" stroke="#555" stroke-width="0.6"/>
<polygon points="938.5,894.9 948.2,894.1 948.2,969 938.5,969" fill="#a3a3a3" stroke="#555" stroke-width="0.6"/>
<polygon points="968.2,892.5 977.9,891.7 977.9,969 968.2,969" fill="#a3a3a3" stroke="#555" stroke-width="0.6"/>
<polygon points="997.9,890.2 1007.6,889.4 1007.6,969 997.9,969" fill="#a3a3a3" stroke="#555" stroke-width="0.6"/>
<polygon points="1027.6,887.9 1037.3,887.1 1037.3,969 1027.6,969" fill="#a3a3a3" stroke="#555" stroke-width="0.6"/>
<polygon points="1057.3,885.5 1067.0,884.7 1067.0,969 1057.3,969" fill="#a3a3a3" stroke="#555" stroke-width="0.6"/>
<polygon points="1087.0,883.2 1096.7,882.4 1096.7,969 1087.0,969" fill="#a3a3a3" stroke="#555" stroke-width="0.6"/>
<polygon points="1116.7,880.8 1126.4,880.0 1126.4,969 1116.7,969" fill="#a3a3a3" stroke="#555" stroke-width="0.6"/>
<polygon points="1146.4,878.5 1156.1,877.7 1156.1,969 1146.4,969" fill="#a3a3a3" stroke="#555" stroke-width="0.6"/>
<polygon points="1176.1,876.1 1185.8,875.3 1185.8,969 1176.1,969" fill="#a3a3a3" stroke="#555" stroke-width="0.6"/>
<polygon points="1205.8,873.8 1215.5,873.0 1215.5,969 1205.8,969" fill="#a3a3a3" stroke="#555" stroke-width="0.6"/>
<polygon points="1235.5,871.4 1245.2,870.6 1245.2,969 1235.5,969" fill="#a3a3a3" stroke="#555" stroke-width="0.6"/>
<polygon points="1265.2,869.1 1274.9,868.3 1274.9,969 1265.2,969" fill="#a3a3a3" stroke="#555" stroke-width="0.6"/>
<polygon points="1294.9,866.7 1304.6,865.9 1304.6,969 1294.9,969" fill="#a3a3a3" stroke="#555" stroke-width="0.6"/>
<polygon points="1324.6,864.4 1334.3,863.6 1334.3,969 1324.6,969" fill="#a3a3a3" stroke="#555" stroke-width="0.6"/>
<polygon points="1354.3,862.0 1364.0,861.2 1364.0,969 1354.3,969" fill="#a3a3a3" stroke="#555" stroke-width="0.6"/>
<polygon points="1384.0,859.7 1393.7,858.9 1393.7,969 1384.0,969" fill="#a3a3a3" stroke="#555" stroke-width="0.6"/>
<polygon points="1413.7,857.3 1423.4,856.5 1423.4,969 1413.7,969" fill="#a3a3a3" stroke="#555" stroke-width="0.6"/>
<polygon points="1443.4,855.0 1453.1,854.2 1453.1,969 1443.4,969" fill="#a3a3a3" stroke="#555" stroke-width="0.6"/>
<polygon points="1473.1,852.7 1482.8,851.9 1482.8,969 1473.1,969" fill="#a3a3a3" stroke="#555" stroke-width="0.6"/>
<polygon points="1502.8,850.3 1512.5,849.5 1512.5,969 1502.8,969" fill="#a3a3a3" stroke="#555" stroke-width="0.6"/>
<polygon points="1532.5,848.0 1542.2,847.2 1542.2,969 1532.5,969" fill="#a3a3a3" stroke="#555" stroke-width="0.6"/>
<polygon points="1562.2,845.6 1571.9,844.8 1571.9,969 1562.2,969" fill="#a3a3a3" stroke="#555" stroke-width="0.6"/>
<polygon points="1591.9,843.3 1601.6,842.5 1601.6,969 1591.9,969" fill="#a3a3a3" stroke="#555" stroke-width="0.6"/>
<polygon points="1621.6,840.9 1631.3,840.1 1631.3,969 1621.6,969" fill="#a3a3a3" stroke="#555" stroke-width="0.6"/>
<polygon points="1651.3,838.6 1661.0,837.8 1661.0,969 1651.3,969" fill="#a3a3a3" stroke="#555" stroke-width="0.6"/>
<polygon points="1681.0,836.2 1690.7,835.4 1690.7,969 1681.0,969" fill="#a3a3a3" stroke="#555" stroke-width="0.6"/>
<polygon points="1710.7,833.9 1720.4,833.1 1720.4,969 1710.7,969" fill="#a3a3a3" stroke="#555" stroke-width="0.6"/>
<polygon points="1740.4,831.5 1750.1,830.7 1750.1,969 1740.4,969" fill="#a3a3a3" stroke="#555" stroke-width="0.6"/>
<line x1="312.8" y1="927" x2="312.8" y2="885" stroke="#1010e0" stroke-width="2.2"/>
<polygon points="307.5,888 318,888 312.8,873" fill="#1414e6"/>
<line x1="312.8" y1="927" x2="352" y2="924.5" stroke="#e01010" stroke-width="2.2"/>
<polygon points="350,919 350,929.5 367,924" fill="#e51414"/>
<line x1="312.8" y1="927" x2="300" y2="918" stroke="#107010" stroke-width="2"/>
<circle cx="299.5" cy="917.5" r="3.6" fill="#22dd22"/>
</svg></body></html>
